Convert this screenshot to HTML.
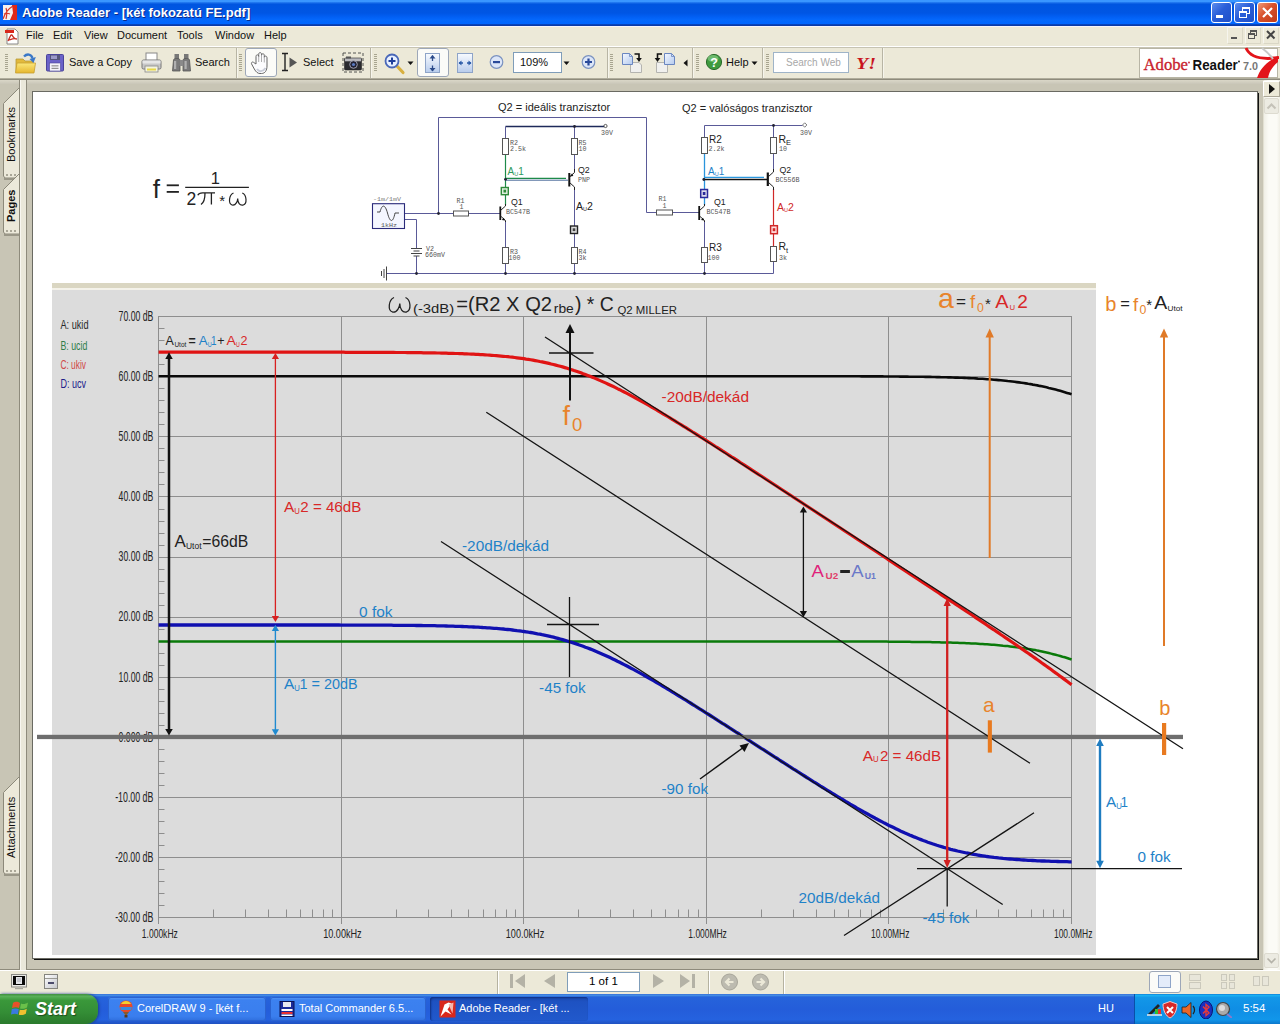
<!DOCTYPE html>
<html><head><meta charset="utf-8"><title>Adobe Reader</title>
<style>
html,body{margin:0;padding:0;}
body{width:1280px;height:1024px;overflow:hidden;position:relative;background:#ECE9D8;font-family:"Liberation Sans",sans-serif;font-size:11px;color:#000;}
.a{position:absolute;}
.t{position:absolute;white-space:nowrap;line-height:1;}
#title{left:0;top:0;width:1280px;height:26px;background:linear-gradient(to bottom,#3A96FF 0px,#3A96FF 1.5px,#1468E8 3px,#0055E0 4.5px,#0056E4 13px,#0260F4 17px,#0468FC 20px,#0066FF 23.5px,#0A3AA8 24.8px,#0A3AA8 26px);}
#title .txt{left:22px;top:6px;font-size:13px;font-weight:bold;color:#fff;text-shadow:1px 1px 0 #0A2A8A;}
.wb{position:absolute;top:2px;width:21px;height:21px;border-radius:3px;border:1px solid #fff;box-sizing:border-box;background:linear-gradient(135deg,#5C8DEE 0%,#2A5ED8 45%,#1F4FC8 100%);}
.wb.x{background:linear-gradient(135deg,#EE9A78 0%,#D8502A 45%,#C03A18 100%);}
#menu{left:0;top:26px;width:1280px;height:20px;background:#ECE9D8;border-top:1px solid #F6F4FA;box-sizing:border-box;}
#menu .t{top:3px;font-size:11px;color:#111;}
#tb{left:0;top:46px;width:1280px;height:34px;background:#ECE9D8;border-top:1px solid #fff;box-sizing:border-box;}
.grip{position:absolute;top:54px;width:3px;height:18px;background:repeating-linear-gradient(to bottom,#A8A590 0,#A8A590 1px,#ECE9D8 1px,#ECE9D8 2px);}
.sep{position:absolute;top:48px;width:1px;height:30px;background:#B8B5A4;border-right:1px solid #F6F5EC;}
.tbt{position:absolute;top:57px;font-size:11px;color:#111;white-space:nowrap;line-height:1;}
.pressed{position:absolute;background:#FBFBF8;border:1px solid #9DA7B8;border-radius:3px;box-sizing:border-box;}
#docbg{left:0;top:80px;width:1280px;height:890px;background:#C8C5B5;}
#status{left:0;top:970px;width:1280px;height:24px;background:#ECE9D8;border-top:1px solid #fff;box-sizing:border-box;}
#task{left:0;top:994px;width:1280px;height:30px;background:linear-gradient(to bottom,#3168D5 0%,#4993E6 4%,#2663DB 10%,#245DDA 50%,#2562DF 85%,#1F51C0 100%);}
#start{left:0;top:994px;width:98px;height:30px;border-radius:0 12px 12px 0;background:linear-gradient(to bottom,#3F8E3F 0%,#58B058 8%,#3A983A 22%,#348E36 60%,#2A7A2C 100%);box-shadow:1px 0 3px #1b3d8f;}
#start .t{left:35px;top:6px;font-size:18px;font-weight:bold;font-style:italic;color:#fff;text-shadow:1px 1px 1px #1d4d1d;}
.tk{position:absolute;top:997px;height:24px;border-radius:3px;background:linear-gradient(to bottom,#5B9CF5 0%,#3C81F0 12%,#3A7EEE 80%,#2F6EDD 100%);box-shadow:inset 0 0 0 1px #2A63D0;}
.tk.act{background:linear-gradient(to bottom,#1A49B0 0%,#1E52C2 20%,#2159CC 100%);box-shadow:inset 1px 1px 2px #0f2f80;}
.tk .t{left:29px;top:6px;font-size:11px;color:#fff;}
#tray{left:1134px;top:994px;width:146px;height:30px;background:linear-gradient(to bottom,#0F80D8 0%,#19B0F2 5%,#1297E8 12%,#0F8EE5 50%,#1196EA 85%,#0C78CC 100%);border-left:1px solid #0A4FA8;box-sizing:border-box;}
</style></head><body>
<div id="title" class="a"><div class="t txt">Adobe Reader - [két fokozatú FE.pdf]</div><svg class="a" style="left:3px;top:5px" width="14" height="15" viewBox="0 0 14 15"><rect x="0" y="0" width="14" height="15" fill="#F4F0EE"/><path d="M9,0 H14 V15 H7 L10,8 Z" fill="#E02818"/><path d="M0,14 C2,8 5,4 10,1 M1,9 C3,8 5,8 7,9 M3,3 C4,6 4,10 3,14" stroke="#D83828" stroke-width="1.2" fill="none"/></svg><div class="wb" style="left:1211px"><div class="a" style="left:4px;top:12px;width:7px;height:3px;background:#fff"></div></div><div class="wb" style="left:1234px"><div class="a" style="left:7px;top:4px;width:8px;height:7px;border:1px solid #fff;border-top-width:2px;box-sizing:border-box"></div><div class="a" style="left:4px;top:8px;width:8px;height:7px;border:1px solid #fff;border-top-width:2px;box-sizing:border-box;background:#2A5ED8"></div></div><div class="wb x" style="left:1257px"><svg class="a" style="left:0;top:0" width="19" height="19"><path d="M5,5 L14,14 M14,5 L5,14" stroke="#fff" stroke-width="2.2"/></svg></div></div><div id="menu" class="a"><svg class="a" style="left:4px;top:1px" width="16" height="17" viewBox="0 0 16 17"><path d="M3,1 H11 L14,4 V16 H3 Z" fill="#fff" stroke="#888" stroke-width="1"/><rect x="1" y="2" width="9" height="3" fill="#D9281C"/><path d="M4,13 C6,9 7,6 8,7 C9,9 10,11 13,11 M5,12 C8,11 10,10 12,11" stroke="#C8281E" stroke-width="1.3" fill="none"/></svg><div class="t" style="left:26px">File</div><div class="t" style="left:53px">Edit</div><div class="t" style="left:84px">View</div><div class="t" style="left:117px">Document</div><div class="t" style="left:177px">Tools</div><div class="t" style="left:215px">Window</div><div class="t" style="left:264px">Help</div><div class="a" style="left:1227px;top:0px;width:16px;height:17px;border:1px solid #F6F5EE;border-right-color:#DAD7C6;border-bottom-color:#DAD7C6;box-sizing:border-box"></div><div class="a" style="left:1245px;top:0px;width:16px;height:17px;border:1px solid #F6F5EE;border-right-color:#DAD7C6;border-bottom-color:#DAD7C6;box-sizing:border-box"></div><div class="a" style="left:1263px;top:0px;width:16px;height:17px;border:1px solid #F6F5EE;border-right-color:#DAD7C6;border-bottom-color:#DAD7C6;box-sizing:border-box"></div><div class="a" style="left:1231px;top:10px;width:6px;height:2px;background:#555"></div><div class="a" style="left:1250px;top:3px;width:7px;height:6px;border:1px solid #555;border-top-width:2px;box-sizing:border-box"></div><div class="a" style="left:1248px;top:6px;width:7px;height:6px;border:1px solid #555;border-top-width:2px;box-sizing:border-box;background:#ECE9D8"></div><svg class="a" style="left:1266px;top:3px" width="10" height="10"><path d="M1,1 L8.5,8.5 M8.5,1 L1,8.5" stroke="#444" stroke-width="2"/></svg></div><div id="tb" class="a"></div><div class="a" style="left:0;top:47px;width:1280px;height:1px;background:#C6C3B2"></div><div class="a" style="left:0;top:78px;width:1280px;height:1px;background:#B0AD9C"></div><div class="a" style="left:0;top:79px;width:1280px;height:1px;background:#8E8B7C"></div><div class="grip" style="left:5px"></div><div class="grip" style="left:239px"></div><div class="grip" style="left:374px"></div><div class="grip" style="left:610px"></div><div class="grip" style="left:696px"></div><div class="grip" style="left:766px"></div><div class="sep" style="left:236px"></div><div class="sep" style="left:370px"></div><div class="sep" style="left:607px"></div><div class="sep" style="left:692px"></div><div class="sep" style="left:762px"></div><div class="sep" style="left:882px"></div><div class="tbt" style="left:69px">Save a Copy</div><div class="tbt" style="left:195px">Search</div><div class="tbt" style="left:303px">Select</div><div class="tbt" style="left:726px">Help</div><div class="pressed" style="left:245px;top:48px;width:32px;height:29px"></div><div class="pressed" style="left:417px;top:48px;width:32px;height:29px"></div><div class="a" style="left:513px;top:52px;width:49px;height:21px;background:#fff;border:1px solid #7F9DB9;box-sizing:border-box"></div><div class="tbt" style="left:520px">109%</div><div class="a" style="left:773px;top:52px;width:76px;height:21px;background:#fff;border:1px solid #9FB4C8;box-sizing:border-box"></div><div class="tbt" style="left:786px;top:58px;color:#A8A8A8;font-size:10px">Search Web</div><svg class="a" style="left:854px;top:52px" width="26" height="22"><text x="2" y="17" font-family="Liberation Serif, serif" font-weight="bold" font-style="italic" font-size="17" fill="#C8141E" textLength="20" lengthAdjust="spacingAndGlyphs">Y!</text></svg><svg class="a" style="left:1138px;top:47px" width="141" height="32" viewBox="0 0 141 32"><rect x="1.5" y="1.5" width="138" height="29" fill="#fff" stroke="#B8B5A5" stroke-width="1"/><text x="5.5" y="23" font-family="Liberation Serif, serif" font-size="17" fill="#C81E2D" stroke="#C81E2D" stroke-width="0.35" textLength="44.5" lengthAdjust="spacingAndGlyphs">Adobe</text><circle cx="51" cy="15.5" r="0.9" fill="#C81E2D"/><text x="54.5" y="23" font-family="Liberation Sans, sans-serif" font-weight="bold" font-size="14.5" fill="#111" textLength="45.3" lengthAdjust="spacingAndGlyphs">Reader</text><circle cx="101" cy="14.5" r="0.9" fill="#111"/><text x="105" y="23" font-family="Liberation Sans, sans-serif" font-weight="bold" font-size="11.5" fill="#777" textLength="15" lengthAdjust="spacingAndGlyphs">7.0</text><path d="M108,1 C112,10 124,13 141,10.5" stroke="#E3141A" stroke-width="3" fill="none"/><path d="M140,9 L140,15 C134,20 131,25 130,31 L119,31 C122,22 128,15 140,9 Z" fill="#E3141A"/><path d="M124,1 C128,4 132,8 135,12" stroke="#C8C8C8" stroke-width="2" fill="none"/></svg><div id="docbg" class="a"></div><div class="a" style="left:0;top:80px;width:1280px;height:4px;background:linear-gradient(to bottom,#DAD7C8,#C9C6B8)"></div><div class="a" style="left:0;top:969px;width:1263px;height:1px;background:#8E8B7C"></div><div class="a" style="left:19px;top:80px;width:8px;height:890px;background:#EAE8DA;border-left:1px solid #8E8B7C;border-right:1px solid #8E8B7C;box-sizing:border-box"></div><div class="a" style="left:20px;top:80px;width:1px;height:890px;background:#F8F7F0"></div><div class="a" style="left:1263px;top:80px;width:17px;height:890px;background:linear-gradient(to right,#F0EFE6,#FBFBF6 30%,#FBFBF6 80%,#F0EFE6);border-left:1px solid #E2E0D2;box-sizing:border-box"></div><div class="a" style="left:1264px;top:98px;width:15px;height:16px;background:#ECEBE2;border:1px solid #DDDBD0;border-radius:2px;box-sizing:border-box"></div><svg class="a" style="left:1266px;top:102px" width="11" height="8"><path d="M1.5,6.5 L5.5,2.5 L9.5,6.5" stroke="#C4C2B8" stroke-width="2" fill="none"/></svg><div class="a" style="left:1264px;top:953px;width:15px;height:15px;background:#ECEBE2;border:1px solid #DDDBD0;border-radius:2px;box-sizing:border-box"></div><svg class="a" style="left:1266px;top:957px" width="11" height="8"><path d="M1.5,1.5 L5.5,5.5 L9.5,1.5" stroke="#B4B2A8" stroke-width="1.6" fill="none"/></svg><div id="status" class="a"></div><div class="a" style="left:567px;top:972px;width:73px;height:20px;background:#fff;border:1px solid #7F9DB9;box-sizing:border-box"></div><div class="t" style="left:589px;top:976px;font-size:11.5px">1 of 1</div><div class="a" style="left:497px;top:971px;width:1px;height:23px;background:#B5B2A0;border-right:1px solid #fff"></div><div class="a" style="left:708px;top:971px;width:1px;height:23px;background:#B5B2A0;border-right:1px solid #fff"></div><div class="a" style="left:783px;top:971px;width:1px;height:23px;background:#B5B2A0;border-right:1px solid #fff"></div><div class="pressed" style="left:1149px;top:971px;width:32px;height:22px"></div><div id="task" class="a"></div><div id="start" class="a"><div class="t">Start</div></div><div class="tk" style="left:108px;width:158px"><div class="t">CorelDRAW 9 - [két f...</div></div><div class="tk" style="left:270px;width:156px"><div class="t">Total Commander 6.5...</div></div><div class="tk act" style="left:430px;width:158px"><div class="t">Adobe Reader - [két ...</div></div><div class="t" style="left:1098px;top:1003px;color:#fff;font-size:11px">HU</div><div id="tray" class="a"><div class="t" style="left:108px;top:9px;color:#fff;font-size:11.5px">5:54</div></div><svg id="doc" width="1280" height="1024" viewBox="0 0 1280 1024" style="position:absolute;left:0;top:0"><rect x="34" y="93" width="1225" height="867" fill="#111"/><rect x="32.5" y="91.5" width="1225" height="867" fill="#fff" stroke="#6A6A62" stroke-width="1"/><rect x="52" y="283" width="1044" height="5" fill="#DAD6C2"/><rect x="52" y="288" width="1044" height="2" fill="#F4F2EA"/><rect x="52" y="290" width="1044" height="665" fill="#DCDCDC"/><path d="M158,316.5 H1072 M158,376.5 H1072 M158,436.5 H1072 M158,496.5 H1072 M158,557.5 H1072 M158,617.5 H1072 M158,677.5 H1072 M158,737.5 H1072 M158,797.5 H1072 M158,857.5 H1072 M158,917.5 H1072 M158.5,316 V924 M341.5,316 V924 M523.5,316 V924 M706.5,316 V924 M888.5,316 V924 M1071.5,316 V924" stroke="#8E8E8E" stroke-width="1" fill="none"/><path d="M158,328.5 H164.5 M158,340.5 H164.5 M158,352.5 H164.5 M158,364.5 H164.5 M158,388.5 H164.5 M158,400.5 H164.5 M158,412.5 H164.5 M158,424.5 H164.5 M158,448.5 H164.5 M158,460.5 H164.5 M158,472.5 H164.5 M158,484.5 H164.5 M158,509.5 H164.5 M158,521.5 H164.5 M158,533.5 H164.5 M158,545.5 H164.5 M158,569.5 H164.5 M158,581.5 H164.5 M158,593.5 H164.5 M158,605.5 H164.5 M158,629.5 H164.5 M158,641.5 H164.5 M158,653.5 H164.5 M158,665.5 H164.5 M158,689.5 H164.5 M158,701.5 H164.5 M158,713.5 H164.5 M158,725.5 H164.5 M158,749.5 H164.5 M158,761.5 H164.5 M158,773.5 H164.5 M158,785.5 H164.5 M158,809.5 H164.5 M158,821.5 H164.5 M158,833.5 H164.5 M158,845.5 H164.5 M158,869.5 H164.5 M158,881.5 H164.5 M158,893.5 H164.5 M158,905.5 H164.5 M213.5,909.5 V917 M245.5,909.5 V917 M268.5,909.5 V917 M286.5,909.5 V917 M300.5,909.5 V917 M312.5,909.5 V917 M323.5,909.5 V917 M332.5,909.5 V917 M396.5,909.5 V917 M428.5,909.5 V917 M451.5,909.5 V917 M468.5,909.5 V917 M483.5,909.5 V917 M495.5,909.5 V917 M506.5,909.5 V917 M515.5,909.5 V917 M578.5,909.5 V917 M610.5,909.5 V917 M633.5,909.5 V917 M651.5,909.5 V917 M665.5,909.5 V917 M678.5,909.5 V917 M688.5,909.5 V917 M698.5,909.5 V917 M761.5,909.5 V917 M793.5,909.5 V917 M816.5,909.5 V917 M834.5,909.5 V917 M848.5,909.5 V917 M860.5,909.5 V917 M871.5,909.5 V917 M880.5,909.5 V917 M943.5,909.5 V917 M976.5,909.5 V917 M998.5,909.5 V917 M1016.5,909.5 V917 M1031.5,909.5 V917 M1043.5,909.5 V917 M1053.5,909.5 V917 M1063.5,909.5 V917" stroke="#8E8E8E" stroke-width="1" fill="none"/><text x="153.4" y="320.8" font-size="13.8" fill="#222" font-family="Liberation Sans, sans-serif" text-anchor="end" textLength="34.8" lengthAdjust="spacingAndGlyphs">70.00 dB</text><text x="153.4" y="380.93" font-size="13.8" fill="#222" font-family="Liberation Sans, sans-serif" text-anchor="end" textLength="34.8" lengthAdjust="spacingAndGlyphs">60.00 dB</text><text x="153.4" y="441.06" font-size="13.8" fill="#222" font-family="Liberation Sans, sans-serif" text-anchor="end" textLength="34.8" lengthAdjust="spacingAndGlyphs">50.00 dB</text><text x="153.4" y="501.19" font-size="13.8" fill="#222" font-family="Liberation Sans, sans-serif" text-anchor="end" textLength="34.8" lengthAdjust="spacingAndGlyphs">40.00 dB</text><text x="153.4" y="561.32" font-size="13.8" fill="#222" font-family="Liberation Sans, sans-serif" text-anchor="end" textLength="34.8" lengthAdjust="spacingAndGlyphs">30.00 dB</text><text x="153.4" y="621.45" font-size="13.8" fill="#222" font-family="Liberation Sans, sans-serif" text-anchor="end" textLength="34.8" lengthAdjust="spacingAndGlyphs">20.00 dB</text><text x="153.4" y="681.5800000000002" font-size="13.8" fill="#222" font-family="Liberation Sans, sans-serif" text-anchor="end" textLength="34.8" lengthAdjust="spacingAndGlyphs">10.00 dB</text><text x="153.4" y="741.71" font-size="13.8" fill="#222" font-family="Liberation Sans, sans-serif" text-anchor="end" textLength="34.8" lengthAdjust="spacingAndGlyphs">0.000 dB</text><text x="153.4" y="801.8400000000001" font-size="13.8" fill="#222" font-family="Liberation Sans, sans-serif" text-anchor="end" textLength="38.2" lengthAdjust="spacingAndGlyphs">-10.00 dB</text><text x="153.4" y="861.9700000000001" font-size="13.8" fill="#222" font-family="Liberation Sans, sans-serif" text-anchor="end" textLength="38.2" lengthAdjust="spacingAndGlyphs">-20.00 dB</text><text x="153.4" y="922.1000000000001" font-size="13.8" fill="#222" font-family="Liberation Sans, sans-serif" text-anchor="end" textLength="38.2" lengthAdjust="spacingAndGlyphs">-30.00 dB</text><text x="159.79999999999998" y="938" font-size="13.5" fill="#222" font-family="Liberation Sans, sans-serif" text-anchor="middle" textLength="36" lengthAdjust="spacingAndGlyphs" >1.000kHz</text><text x="342.3999999999999" y="938" font-size="13.5" fill="#222" font-family="Liberation Sans, sans-serif" text-anchor="middle" textLength="38.5" lengthAdjust="spacingAndGlyphs" >10.00kHz</text><text x="525.0" y="938" font-size="13.5" fill="#222" font-family="Liberation Sans, sans-serif" text-anchor="middle" textLength="38.5" lengthAdjust="spacingAndGlyphs" >100.0kHz</text><text x="707.6" y="938" font-size="13.5" fill="#222" font-family="Liberation Sans, sans-serif" text-anchor="middle" textLength="38.5" lengthAdjust="spacingAndGlyphs" >1.000MHz</text><text x="890.1999999999999" y="938" font-size="13.5" fill="#222" font-family="Liberation Sans, sans-serif" text-anchor="middle" textLength="38.5" lengthAdjust="spacingAndGlyphs" >10.00MHz</text><text x="1073.1999999999996" y="938" font-size="13.5" fill="#222" font-family="Liberation Sans, sans-serif" text-anchor="middle" textLength="38.5" lengthAdjust="spacingAndGlyphs" >100.0MHz</text><text x="60.4" y="329.3" font-size="13" fill="#2A2A2A" font-family="Liberation Sans, sans-serif" textLength="28.1" lengthAdjust="spacingAndGlyphs">A: ukid</text><text x="60.4" y="349.5" font-size="13" fill="#2E7D4A" font-family="Liberation Sans, sans-serif" textLength="26.9" lengthAdjust="spacingAndGlyphs">B: ucid</text><text x="60.4" y="368.7" font-size="13" fill="#D04848" font-family="Liberation Sans, sans-serif" textLength="25.6" lengthAdjust="spacingAndGlyphs">C: ukiv</text><text x="60.4" y="387.8" font-size="13" fill="#20208A" font-family="Liberation Sans, sans-serif" textLength="25.6" lengthAdjust="spacingAndGlyphs">D: ucv</text><path d="M158.6,641.4 L160.9,641.4 L163.2,641.4 L165.4,641.4 L167.7,641.4 L170.0,641.4 L172.3,641.4 L174.6,641.4 L176.9,641.4 L179.1,641.4 L181.4,641.4 L183.7,641.4 L186.0,641.4 L188.3,641.4 L190.6,641.4 L192.8,641.4 L195.1,641.4 L197.4,641.4 L199.7,641.4 L202.0,641.4 L204.2,641.4 L206.5,641.4 L208.8,641.4 L211.1,641.4 L213.4,641.4 L215.7,641.4 L217.9,641.4 L220.2,641.4 L222.5,641.4 L224.8,641.4 L227.1,641.4 L229.4,641.4 L231.6,641.4 L233.9,641.4 L236.2,641.4 L238.5,641.4 L240.8,641.4 L243.1,641.4 L245.3,641.4 L247.6,641.4 L249.9,641.4 L252.2,641.4 L254.5,641.4 L256.7,641.4 L259.0,641.4 L261.3,641.4 L263.6,641.4 L265.9,641.4 L268.2,641.4 L270.4,641.4 L272.7,641.4 L275.0,641.4 L277.3,641.4 L279.6,641.4 L281.9,641.4 L284.1,641.4 L286.4,641.4 L288.7,641.4 L291.0,641.4 L293.3,641.4 L295.5,641.4 L297.8,641.4 L300.1,641.4 L302.4,641.4 L304.7,641.4 L307.0,641.4 L309.2,641.4 L311.5,641.4 L313.8,641.4 L316.1,641.4 L318.4,641.4 L320.7,641.4 L322.9,641.4 L325.2,641.4 L327.5,641.4 L329.8,641.4 L332.1,641.4 L334.4,641.4 L336.6,641.4 L338.9,641.4 L341.2,641.4 L343.5,641.4 L345.8,641.4 L348.0,641.4 L350.3,641.4 L352.6,641.4 L354.9,641.4 L357.2,641.4 L359.5,641.4 L361.7,641.4 L364.0,641.4 L366.3,641.4 L368.6,641.4 L370.9,641.4 L373.2,641.4 L375.4,641.4 L377.7,641.4 L380.0,641.4 L382.3,641.4 L384.6,641.4 L386.8,641.4 L389.1,641.4 L391.4,641.4 L393.7,641.4 L396.0,641.4 L398.3,641.4 L400.5,641.4 L402.8,641.4 L405.1,641.4 L407.4,641.4 L409.7,641.4 L412.0,641.4 L414.2,641.4 L416.5,641.4 L418.8,641.4 L421.1,641.4 L423.4,641.4 L425.7,641.4 L427.9,641.4 L430.2,641.4 L432.5,641.4 L434.8,641.4 L437.1,641.4 L439.3,641.4 L441.6,641.4 L443.9,641.4 L446.2,641.4 L448.5,641.4 L450.8,641.4 L453.0,641.4 L455.3,641.4 L457.6,641.4 L459.9,641.4 L462.2,641.4 L464.5,641.4 L466.7,641.4 L469.0,641.4 L471.3,641.4 L473.6,641.4 L475.9,641.4 L478.1,641.4 L480.4,641.4 L482.7,641.4 L485.0,641.4 L487.3,641.4 L489.6,641.4 L491.8,641.4 L494.1,641.4 L496.4,641.4 L498.7,641.4 L501.0,641.4 L503.3,641.4 L505.5,641.4 L507.8,641.4 L510.1,641.4 L512.4,641.4 L514.7,641.4 L517.0,641.4 L519.2,641.4 L521.5,641.4 L523.8,641.4 L526.1,641.4 L528.4,641.4 L530.6,641.4 L532.9,641.4 L535.2,641.4 L537.5,641.4 L539.8,641.4 L542.1,641.4 L544.3,641.4 L546.6,641.4 L548.9,641.4 L551.2,641.4 L553.5,641.4 L555.8,641.4 L558.0,641.4 L560.3,641.4 L562.6,641.4 L564.9,641.4 L567.2,641.4 L569.4,641.4 L571.7,641.4 L574.0,641.4 L576.3,641.4 L578.6,641.4 L580.9,641.4 L583.1,641.4 L585.4,641.4 L587.7,641.4 L590.0,641.4 L592.3,641.4 L594.6,641.4 L596.8,641.4 L599.1,641.4 L601.4,641.4 L603.7,641.4 L606.0,641.4 L608.3,641.4 L610.5,641.4 L612.8,641.4 L615.1,641.4 L617.4,641.4 L619.7,641.4 L621.9,641.4 L624.2,641.4 L626.5,641.4 L628.8,641.4 L631.1,641.4 L633.4,641.4 L635.6,641.4 L637.9,641.4 L640.2,641.4 L642.5,641.4 L644.8,641.4 L647.1,641.4 L649.3,641.4 L651.6,641.4 L653.9,641.4 L656.2,641.4 L658.5,641.4 L660.7,641.4 L663.0,641.4 L665.3,641.4 L667.6,641.4 L669.9,641.4 L672.2,641.4 L674.4,641.4 L676.7,641.4 L679.0,641.4 L681.3,641.4 L683.6,641.4 L685.9,641.4 L688.1,641.4 L690.4,641.4 L692.7,641.4 L695.0,641.4 L697.3,641.4 L699.6,641.4 L701.8,641.4 L704.1,641.4 L706.4,641.4 L708.7,641.4 L711.0,641.4 L713.2,641.4 L715.5,641.4 L717.8,641.4 L720.1,641.4 L722.4,641.4 L724.7,641.4 L726.9,641.4 L729.2,641.4 L731.5,641.4 L733.8,641.4 L736.1,641.4 L738.4,641.4 L740.6,641.4 L742.9,641.4 L745.2,641.4 L747.5,641.4 L749.8,641.4 L752.0,641.4 L754.3,641.4 L756.6,641.4 L758.9,641.4 L761.2,641.4 L763.5,641.4 L765.7,641.4 L768.0,641.4 L770.3,641.4 L772.6,641.4 L774.9,641.4 L777.2,641.4 L779.4,641.4 L781.7,641.4 L784.0,641.4 L786.3,641.4 L788.6,641.4 L790.9,641.4 L793.1,641.4 L795.4,641.4 L797.7,641.4 L800.0,641.4 L802.3,641.4 L804.5,641.4 L806.8,641.4 L809.1,641.4 L811.4,641.4 L813.7,641.4 L816.0,641.4 L818.2,641.4 L820.5,641.4 L822.8,641.4 L825.1,641.4 L827.4,641.4 L829.7,641.5 L831.9,641.5 L834.2,641.5 L836.5,641.5 L838.8,641.5 L841.1,641.5 L843.3,641.5 L845.6,641.5 L847.9,641.5 L850.2,641.5 L852.5,641.5 L854.8,641.5 L857.0,641.5 L859.3,641.5 L861.6,641.5 L863.9,641.5 L866.2,641.5 L868.5,641.5 L870.7,641.6 L873.0,641.6 L875.3,641.6 L877.6,641.6 L879.9,641.6 L882.2,641.6 L884.4,641.6 L886.7,641.6 L889.0,641.7 L891.3,641.7 L893.6,641.7 L895.8,641.7 L898.1,641.7 L900.4,641.7 L902.7,641.8 L905.0,641.8 L907.3,641.8 L909.5,641.8 L911.8,641.9 L914.1,641.9 L916.4,641.9 L918.7,641.9 L921.0,642.0 L923.2,642.0 L925.5,642.0 L927.8,642.1 L930.1,642.1 L932.4,642.2 L934.6,642.2 L936.9,642.3 L939.2,642.3 L941.5,642.4 L943.8,642.4 L946.1,642.5 L948.3,642.5 L950.6,642.6 L952.9,642.7 L955.2,642.7 L957.5,642.8 L959.8,642.9 L962.0,643.0 L964.3,643.1 L966.6,643.2 L968.9,643.3 L971.2,643.4 L973.5,643.5 L975.7,643.6 L978.0,643.7 L980.3,643.9 L982.6,644.0 L984.9,644.2 L987.1,644.3 L989.4,644.5 L991.7,644.7 L994.0,644.8 L996.3,645.0 L998.6,645.2 L1000.8,645.4 L1003.1,645.7 L1005.4,645.9 L1007.7,646.1 L1010.0,646.4 L1012.3,646.7 L1014.5,647.0 L1016.8,647.2 L1019.1,647.6 L1021.4,647.9 L1023.7,648.2 L1025.9,648.6 L1028.2,648.9 L1030.5,649.3 L1032.8,649.7 L1035.1,650.1 L1037.4,650.6 L1039.6,651.0 L1041.9,651.5 L1044.2,652.0 L1046.5,652.5 L1048.8,653.0 L1051.1,653.6 L1053.3,654.2 L1055.6,654.8 L1057.9,655.4 L1060.2,656.0 L1062.5,656.7 L1064.8,657.3 L1067.0,658.0 L1069.3,658.8 L1071.6,659.5" stroke="#0A7A0A" stroke-width="2.5" fill="none"/><path d="M158.6,376.2 L160.9,376.2 L163.2,376.2 L165.4,376.2 L167.7,376.2 L170.0,376.2 L172.3,376.2 L174.6,376.2 L176.9,376.2 L179.1,376.2 L181.4,376.2 L183.7,376.2 L186.0,376.2 L188.3,376.2 L190.6,376.2 L192.8,376.2 L195.1,376.2 L197.4,376.2 L199.7,376.2 L202.0,376.2 L204.2,376.2 L206.5,376.2 L208.8,376.2 L211.1,376.2 L213.4,376.2 L215.7,376.2 L217.9,376.2 L220.2,376.2 L222.5,376.2 L224.8,376.2 L227.1,376.2 L229.4,376.2 L231.6,376.2 L233.9,376.2 L236.2,376.2 L238.5,376.2 L240.8,376.2 L243.1,376.2 L245.3,376.2 L247.6,376.2 L249.9,376.2 L252.2,376.2 L254.5,376.2 L256.7,376.2 L259.0,376.2 L261.3,376.2 L263.6,376.2 L265.9,376.2 L268.2,376.2 L270.4,376.2 L272.7,376.2 L275.0,376.2 L277.3,376.2 L279.6,376.2 L281.9,376.2 L284.1,376.2 L286.4,376.2 L288.7,376.2 L291.0,376.2 L293.3,376.2 L295.5,376.2 L297.8,376.2 L300.1,376.2 L302.4,376.2 L304.7,376.2 L307.0,376.2 L309.2,376.2 L311.5,376.2 L313.8,376.2 L316.1,376.2 L318.4,376.2 L320.7,376.2 L322.9,376.2 L325.2,376.2 L327.5,376.2 L329.8,376.2 L332.1,376.2 L334.4,376.2 L336.6,376.2 L338.9,376.2 L341.2,376.2 L343.5,376.2 L345.8,376.2 L348.0,376.2 L350.3,376.2 L352.6,376.2 L354.9,376.2 L357.2,376.2 L359.5,376.2 L361.7,376.2 L364.0,376.2 L366.3,376.2 L368.6,376.2 L370.9,376.2 L373.2,376.2 L375.4,376.2 L377.7,376.2 L380.0,376.2 L382.3,376.2 L384.6,376.2 L386.8,376.2 L389.1,376.2 L391.4,376.2 L393.7,376.2 L396.0,376.2 L398.3,376.2 L400.5,376.2 L402.8,376.2 L405.1,376.2 L407.4,376.2 L409.7,376.2 L412.0,376.2 L414.2,376.2 L416.5,376.2 L418.8,376.2 L421.1,376.2 L423.4,376.2 L425.7,376.2 L427.9,376.2 L430.2,376.2 L432.5,376.2 L434.8,376.2 L437.1,376.2 L439.3,376.2 L441.6,376.2 L443.9,376.2 L446.2,376.2 L448.5,376.2 L450.8,376.2 L453.0,376.2 L455.3,376.2 L457.6,376.2 L459.9,376.2 L462.2,376.2 L464.5,376.2 L466.7,376.2 L469.0,376.2 L471.3,376.2 L473.6,376.2 L475.9,376.2 L478.1,376.2 L480.4,376.2 L482.7,376.2 L485.0,376.2 L487.3,376.2 L489.6,376.2 L491.8,376.2 L494.1,376.2 L496.4,376.2 L498.7,376.2 L501.0,376.2 L503.3,376.2 L505.5,376.2 L507.8,376.2 L510.1,376.2 L512.4,376.2 L514.7,376.2 L517.0,376.2 L519.2,376.2 L521.5,376.2 L523.8,376.2 L526.1,376.2 L528.4,376.2 L530.6,376.2 L532.9,376.2 L535.2,376.2 L537.5,376.2 L539.8,376.2 L542.1,376.2 L544.3,376.2 L546.6,376.2 L548.9,376.2 L551.2,376.2 L553.5,376.2 L555.8,376.2 L558.0,376.2 L560.3,376.2 L562.6,376.2 L564.9,376.2 L567.2,376.2 L569.4,376.2 L571.7,376.2 L574.0,376.2 L576.3,376.2 L578.6,376.2 L580.9,376.2 L583.1,376.2 L585.4,376.2 L587.7,376.2 L590.0,376.2 L592.3,376.2 L594.6,376.2 L596.8,376.2 L599.1,376.2 L601.4,376.2 L603.7,376.2 L606.0,376.2 L608.3,376.2 L610.5,376.2 L612.8,376.2 L615.1,376.2 L617.4,376.2 L619.7,376.2 L621.9,376.2 L624.2,376.2 L626.5,376.2 L628.8,376.2 L631.1,376.2 L633.4,376.2 L635.6,376.2 L637.9,376.2 L640.2,376.2 L642.5,376.2 L644.8,376.2 L647.1,376.2 L649.3,376.2 L651.6,376.2 L653.9,376.2 L656.2,376.2 L658.5,376.2 L660.7,376.2 L663.0,376.2 L665.3,376.2 L667.6,376.2 L669.9,376.2 L672.2,376.2 L674.4,376.2 L676.7,376.2 L679.0,376.2 L681.3,376.2 L683.6,376.2 L685.9,376.2 L688.1,376.2 L690.4,376.2 L692.7,376.2 L695.0,376.2 L697.3,376.2 L699.6,376.2 L701.8,376.2 L704.1,376.2 L706.4,376.2 L708.7,376.2 L711.0,376.2 L713.2,376.2 L715.5,376.2 L717.8,376.2 L720.1,376.2 L722.4,376.2 L724.7,376.2 L726.9,376.2 L729.2,376.2 L731.5,376.2 L733.8,376.2 L736.1,376.2 L738.4,376.2 L740.6,376.2 L742.9,376.2 L745.2,376.2 L747.5,376.2 L749.8,376.2 L752.0,376.2 L754.3,376.2 L756.6,376.2 L758.9,376.2 L761.2,376.2 L763.5,376.2 L765.7,376.2 L768.0,376.2 L770.3,376.2 L772.6,376.2 L774.9,376.2 L777.2,376.2 L779.4,376.2 L781.7,376.2 L784.0,376.2 L786.3,376.2 L788.6,376.2 L790.9,376.2 L793.1,376.2 L795.4,376.2 L797.7,376.2 L800.0,376.2 L802.3,376.2 L804.5,376.3 L806.8,376.3 L809.1,376.3 L811.4,376.3 L813.7,376.3 L816.0,376.3 L818.2,376.3 L820.5,376.3 L822.8,376.3 L825.1,376.3 L827.4,376.3 L829.7,376.3 L831.9,376.3 L834.2,376.3 L836.5,376.3 L838.8,376.3 L841.1,376.3 L843.3,376.3 L845.6,376.3 L847.9,376.3 L850.2,376.3 L852.5,376.3 L854.8,376.3 L857.0,376.3 L859.3,376.3 L861.6,376.4 L863.9,376.4 L866.2,376.4 L868.5,376.4 L870.7,376.4 L873.0,376.4 L875.3,376.4 L877.6,376.4 L879.9,376.4 L882.2,376.4 L884.4,376.5 L886.7,376.5 L889.0,376.5 L891.3,376.5 L893.6,376.5 L895.8,376.5 L898.1,376.5 L900.4,376.6 L902.7,376.6 L905.0,376.6 L907.3,376.6 L909.5,376.7 L911.8,376.7 L914.1,376.7 L916.4,376.7 L918.7,376.8 L921.0,376.8 L923.2,376.8 L925.5,376.9 L927.8,376.9 L930.1,376.9 L932.4,377.0 L934.6,377.0 L936.9,377.1 L939.2,377.1 L941.5,377.2 L943.8,377.2 L946.1,377.3 L948.3,377.4 L950.6,377.4 L952.9,377.5 L955.2,377.6 L957.5,377.6 L959.8,377.7 L962.0,377.8 L964.3,377.9 L966.6,378.0 L968.9,378.1 L971.2,378.2 L973.5,378.3 L975.7,378.4 L978.0,378.6 L980.3,378.7 L982.6,378.8 L984.9,379.0 L987.1,379.2 L989.4,379.3 L991.7,379.5 L994.0,379.7 L996.3,379.9 L998.6,380.1 L1000.8,380.3 L1003.1,380.5 L1005.4,380.7 L1007.7,381.0 L1010.0,381.2 L1012.3,381.5 L1014.5,381.8 L1016.8,382.1 L1019.1,382.4 L1021.4,382.7 L1023.7,383.0 L1025.9,383.4 L1028.2,383.8 L1030.5,384.1 L1032.8,384.6 L1035.1,385.0 L1037.4,385.4 L1039.6,385.9 L1041.9,386.3 L1044.2,386.8 L1046.5,387.3 L1048.8,387.9 L1051.1,388.4 L1053.3,389.0 L1055.6,389.6 L1057.9,390.2 L1060.2,390.8 L1062.5,391.5 L1064.8,392.2 L1067.0,392.9 L1069.3,393.6 L1071.6,394.3" stroke="#0A0A0A" stroke-width="2.6" fill="none"/><path d="M158.6,625.0 L160.9,625.0 L163.2,625.0 L165.4,625.0 L167.7,625.0 L170.0,625.0 L172.3,625.0 L174.6,625.0 L176.9,625.0 L179.1,625.0 L181.4,625.0 L183.7,625.0 L186.0,625.0 L188.3,625.0 L190.6,625.0 L192.8,625.0 L195.1,625.0 L197.4,625.0 L199.7,625.0 L202.0,625.0 L204.2,625.0 L206.5,625.0 L208.8,625.0 L211.1,625.0 L213.4,625.0 L215.7,625.0 L217.9,625.0 L220.2,625.0 L222.5,625.0 L224.8,625.0 L227.1,625.0 L229.4,625.0 L231.6,625.0 L233.9,625.0 L236.2,625.0 L238.5,625.0 L240.8,625.0 L243.1,625.0 L245.3,625.0 L247.6,625.0 L249.9,625.0 L252.2,625.0 L254.5,625.0 L256.7,625.0 L259.0,625.0 L261.3,625.0 L263.6,625.0 L265.9,625.0 L268.2,625.0 L270.4,625.0 L272.7,625.0 L275.0,625.0 L277.3,625.0 L279.6,625.0 L281.9,625.0 L284.1,625.0 L286.4,625.0 L288.7,625.0 L291.0,625.0 L293.3,625.0 L295.5,625.0 L297.8,625.0 L300.1,625.0 L302.4,625.0 L304.7,625.0 L307.0,625.0 L309.2,625.0 L311.5,625.0 L313.8,625.0 L316.1,625.0 L318.4,625.0 L320.7,625.0 L322.9,625.0 L325.2,625.0 L327.5,625.0 L329.8,625.0 L332.1,625.0 L334.4,625.0 L336.6,625.0 L338.9,625.0 L341.2,625.1 L343.5,625.1 L345.8,625.1 L348.0,625.1 L350.3,625.1 L352.6,625.1 L354.9,625.1 L357.2,625.1 L359.5,625.1 L361.7,625.1 L364.0,625.1 L366.3,625.1 L368.6,625.1 L370.9,625.1 L373.2,625.1 L375.4,625.2 L377.7,625.2 L380.0,625.2 L382.3,625.2 L384.6,625.2 L386.8,625.2 L389.1,625.2 L391.4,625.2 L393.7,625.3 L396.0,625.3 L398.3,625.3 L400.5,625.3 L402.8,625.3 L405.1,625.3 L407.4,625.4 L409.7,625.4 L412.0,625.4 L414.2,625.4 L416.5,625.5 L418.8,625.5 L421.1,625.5 L423.4,625.6 L425.7,625.6 L427.9,625.6 L430.2,625.7 L432.5,625.7 L434.8,625.7 L437.1,625.8 L439.3,625.8 L441.6,625.9 L443.9,625.9 L446.2,626.0 L448.5,626.1 L450.8,626.1 L453.0,626.2 L455.3,626.3 L457.6,626.3 L459.9,626.4 L462.2,626.5 L464.5,626.6 L466.7,626.7 L469.0,626.8 L471.3,626.9 L473.6,627.0 L475.9,627.1 L478.1,627.2 L480.4,627.3 L482.7,627.5 L485.0,627.6 L487.3,627.8 L489.6,627.9 L491.8,628.1 L494.1,628.3 L496.4,628.4 L498.7,628.6 L501.0,628.8 L503.3,629.0 L505.5,629.3 L507.8,629.5 L510.1,629.7 L512.4,630.0 L514.7,630.3 L517.0,630.6 L519.2,630.8 L521.5,631.2 L523.8,631.5 L526.1,631.8 L528.4,632.2 L530.6,632.5 L532.9,632.9 L535.2,633.3 L537.5,633.8 L539.8,634.2 L542.1,634.7 L544.3,635.1 L546.6,635.6 L548.9,636.1 L551.2,636.7 L553.5,637.2 L555.8,637.8 L558.0,638.4 L560.3,639.0 L562.6,639.6 L564.9,640.3 L567.2,641.0 L569.4,641.7 L571.7,642.4 L574.0,643.1 L576.3,643.9 L578.6,644.7 L580.9,645.5 L583.1,646.3 L585.4,647.2 L587.7,648.0 L590.0,648.9 L592.3,649.8 L594.6,650.8 L596.8,651.7 L599.1,652.7 L601.4,653.7 L603.7,654.7 L606.0,655.7 L608.3,656.8 L610.5,657.8 L612.8,658.9 L615.1,660.0 L617.4,661.2 L619.7,662.3 L621.9,663.4 L624.2,664.6 L626.5,665.8 L628.8,667.0 L631.1,668.2 L633.4,669.4 L635.6,670.6 L637.9,671.9 L640.2,673.1 L642.5,674.4 L644.8,675.7 L647.1,677.0 L649.3,678.3 L651.6,679.6 L653.9,680.9 L656.2,682.3 L658.5,683.6 L660.7,684.9 L663.0,686.3 L665.3,687.7 L667.6,689.0 L669.9,690.4 L672.2,691.8 L674.4,693.2 L676.7,694.6 L679.0,696.0 L681.3,697.4 L683.6,698.8 L685.9,700.2 L688.1,701.6 L690.4,703.0 L692.7,704.5 L695.0,705.9 L697.3,707.3 L699.6,708.8 L701.8,710.2 L704.1,711.6 L706.4,713.1 L708.7,714.5 L711.0,716.0 L713.2,717.4 L715.5,718.9 L717.8,720.4 L720.1,721.8 L722.4,723.3 L724.7,724.7 L726.9,726.2 L729.2,727.7 L731.5,729.1 L733.8,730.6 L736.1,732.1 L738.4,733.5 L740.6,735.0 L742.9,736.5 L745.2,737.9 L747.5,739.4 L749.8,740.9 L752.0,742.4 L754.3,743.8 L756.6,745.3 L758.9,746.8 L761.2,748.3 L763.5,749.7 L765.7,751.2 L768.0,752.7 L770.3,754.1 L772.6,755.6 L774.9,757.1 L777.2,758.5 L779.4,760.0 L781.7,761.5 L784.0,762.9 L786.3,764.4 L788.6,765.9 L790.9,767.3 L793.1,768.8 L795.4,770.2 L797.7,771.7 L800.0,773.1 L802.3,774.6 L804.5,776.0 L806.8,777.5 L809.1,778.9 L811.4,780.3 L813.7,781.8 L816.0,783.2 L818.2,784.6 L820.5,786.1 L822.8,787.5 L825.1,788.9 L827.4,790.3 L829.7,791.7 L831.9,793.1 L834.2,794.5 L836.5,795.9 L838.8,797.3 L841.1,798.6 L843.3,800.0 L845.6,801.4 L847.9,802.7 L850.2,804.1 L852.5,805.4 L854.8,806.7 L857.0,808.1 L859.3,809.4 L861.6,810.7 L863.9,812.0 L866.2,813.2 L868.5,814.5 L870.7,815.8 L873.0,817.0 L875.3,818.3 L877.6,819.5 L879.9,820.7 L882.2,821.9 L884.4,823.1 L886.7,824.2 L889.0,825.4 L891.3,826.5 L893.6,827.6 L895.8,828.7 L898.1,829.8 L900.4,830.9 L902.7,831.9 L905.0,833.0 L907.3,834.0 L909.5,835.0 L911.8,835.9 L914.1,836.9 L916.4,837.8 L918.7,838.7 L921.0,839.6 L923.2,840.5 L925.5,841.3 L927.8,842.2 L930.1,843.0 L932.4,843.8 L934.6,844.5 L936.9,845.3 L939.2,846.0 L941.5,846.7 L943.8,847.4 L946.1,848.0 L948.3,848.6 L950.6,849.3 L952.9,849.9 L955.2,850.4 L957.5,851.0 L959.8,851.5 L962.0,852.0 L964.3,852.5 L966.6,853.0 L968.9,853.4 L971.2,853.9 L973.5,854.3 L975.7,854.7 L978.0,855.1 L980.3,855.5 L982.6,855.8 L984.9,856.1 L987.1,856.5 L989.4,856.8 L991.7,857.1 L994.0,857.4 L996.3,857.6 L998.6,857.9 L1000.8,858.1 L1003.1,858.4 L1005.4,858.6 L1007.7,858.8 L1010.0,859.0 L1012.3,859.2 L1014.5,859.4 L1016.8,859.5 L1019.1,859.7 L1021.4,859.9 L1023.7,860.0 L1025.9,860.1 L1028.2,860.3 L1030.5,860.4 L1032.8,860.5 L1035.1,860.6 L1037.4,860.8 L1039.6,860.9 L1041.9,861.0 L1044.2,861.0 L1046.5,861.1 L1048.8,861.2 L1051.1,861.3 L1053.3,861.4 L1055.6,861.4 L1057.9,861.5 L1060.2,861.6 L1062.5,861.6 L1064.8,861.7 L1067.0,861.7 L1069.3,861.8 L1071.6,861.8" stroke="#1010B0" stroke-width="3.3" fill="none"/><path d="M158.6,352.2 L160.9,352.2 L163.2,352.2 L165.4,352.2 L167.7,352.2 L170.0,352.2 L172.3,352.2 L174.6,352.2 L176.9,352.2 L179.1,352.2 L181.4,352.2 L183.7,352.2 L186.0,352.2 L188.3,352.2 L190.6,352.2 L192.8,352.2 L195.1,352.2 L197.4,352.2 L199.7,352.2 L202.0,352.2 L204.2,352.2 L206.5,352.2 L208.8,352.2 L211.1,352.2 L213.4,352.2 L215.7,352.2 L217.9,352.2 L220.2,352.2 L222.5,352.2 L224.8,352.2 L227.1,352.2 L229.4,352.2 L231.6,352.2 L233.9,352.2 L236.2,352.2 L238.5,352.2 L240.8,352.2 L243.1,352.2 L245.3,352.2 L247.6,352.2 L249.9,352.2 L252.2,352.2 L254.5,352.2 L256.7,352.2 L259.0,352.2 L261.3,352.2 L263.6,352.2 L265.9,352.2 L268.2,352.2 L270.4,352.2 L272.7,352.2 L275.0,352.2 L277.3,352.2 L279.6,352.2 L281.9,352.2 L284.1,352.2 L286.4,352.2 L288.7,352.2 L291.0,352.2 L293.3,352.2 L295.5,352.2 L297.8,352.2 L300.1,352.2 L302.4,352.2 L304.7,352.2 L307.0,352.2 L309.2,352.2 L311.5,352.2 L313.8,352.2 L316.1,352.2 L318.4,352.2 L320.7,352.2 L322.9,352.2 L325.2,352.2 L327.5,352.2 L329.8,352.2 L332.1,352.2 L334.4,352.2 L336.6,352.2 L338.9,352.2 L341.2,352.2 L343.5,352.2 L345.8,352.3 L348.0,352.3 L350.3,352.3 L352.6,352.3 L354.9,352.3 L357.2,352.3 L359.5,352.3 L361.7,352.3 L364.0,352.3 L366.3,352.3 L368.6,352.3 L370.9,352.3 L373.2,352.3 L375.4,352.3 L377.7,352.4 L380.0,352.4 L382.3,352.4 L384.6,352.4 L386.8,352.4 L389.1,352.4 L391.4,352.4 L393.7,352.4 L396.0,352.5 L398.3,352.5 L400.5,352.5 L402.8,352.5 L405.1,352.5 L407.4,352.6 L409.7,352.6 L412.0,352.6 L414.2,352.6 L416.5,352.7 L418.8,352.7 L421.1,352.7 L423.4,352.8 L425.7,352.8 L427.9,352.8 L430.2,352.9 L432.5,352.9 L434.8,352.9 L437.1,353.0 L439.3,353.0 L441.6,353.1 L443.9,353.1 L446.2,353.2 L448.5,353.3 L450.8,353.3 L453.0,353.4 L455.3,353.5 L457.6,353.5 L459.9,353.6 L462.2,353.7 L464.5,353.8 L466.7,353.9 L469.0,354.0 L471.3,354.1 L473.6,354.2 L475.9,354.3 L478.1,354.4 L480.4,354.6 L482.7,354.7 L485.0,354.8 L487.3,355.0 L489.6,355.1 L491.8,355.3 L494.1,355.5 L496.4,355.7 L498.7,355.9 L501.0,356.1 L503.3,356.3 L505.5,356.5 L507.8,356.7 L510.1,357.0 L512.4,357.2 L514.7,357.5 L517.0,357.8 L519.2,358.1 L521.5,358.4 L523.8,358.7 L526.1,359.1 L528.4,359.4 L530.6,359.8 L532.9,360.2 L535.2,360.6 L537.5,361.0 L539.8,361.5 L542.1,361.9 L544.3,362.4 L546.6,362.9 L548.9,363.4 L551.2,364.0 L553.5,364.5 L555.8,365.1 L558.0,365.7 L560.3,366.3 L562.6,366.9 L564.9,367.6 L567.2,368.3 L569.4,369.0 L571.7,369.7 L574.0,370.5 L576.3,371.2 L578.6,372.0 L580.9,372.8 L583.1,373.7 L585.4,374.5 L587.7,375.4 L590.0,376.3 L592.3,377.2 L594.6,378.1 L596.8,379.1 L599.1,380.1 L601.4,381.1 L603.7,382.1 L606.0,383.1 L608.3,384.2 L610.5,385.2 L612.8,386.3 L615.1,387.4 L617.4,388.6 L619.7,389.7 L621.9,390.9 L624.2,392.0 L626.5,393.2 L628.8,394.4 L631.1,395.6 L633.4,396.8 L635.6,398.1 L637.9,399.3 L640.2,400.6 L642.5,401.9 L644.8,403.1 L647.1,404.4 L649.3,405.7 L651.6,407.1 L653.9,408.4 L656.2,409.7 L658.5,411.1 L660.7,412.4 L663.0,413.8 L665.3,415.1 L667.6,416.5 L669.9,417.9 L672.2,419.3 L674.4,420.7 L676.7,422.1 L679.0,423.5 L681.3,424.9 L683.6,426.3 L685.9,427.7 L688.1,429.1 L690.4,430.5 L692.7,432.0 L695.0,433.4 L697.3,434.8 L699.6,436.3 L701.8,437.7 L704.1,439.2 L706.4,440.6 L708.7,442.1 L711.0,443.5 L713.2,445.0 L715.5,446.5 L717.8,447.9 L720.1,449.4 L722.4,450.9 L724.7,452.3 L726.9,453.8 L729.2,455.3 L731.5,456.8 L733.8,458.2 L736.1,459.7 L738.4,461.2 L740.6,462.7 L742.9,464.2 L745.2,465.6 L747.5,467.1 L749.8,468.6 L752.0,470.1 L754.3,471.6 L756.6,473.1 L758.9,474.6 L761.2,476.0 L763.5,477.5 L765.7,479.0 L768.0,480.5 L770.3,482.0 L772.6,483.5 L774.9,485.0 L777.2,486.5 L779.4,488.0 L781.7,489.5 L784.0,491.0 L786.3,492.5 L788.6,494.0 L790.9,495.5 L793.1,497.0 L795.4,498.5 L797.7,500.0 L800.0,501.5 L802.3,503.0 L804.5,504.5 L806.8,506.0 L809.1,507.5 L811.4,509.0 L813.7,510.5 L816.0,512.0 L818.2,513.5 L820.5,515.0 L822.8,516.5 L825.1,518.0 L827.4,519.5 L829.7,521.0 L831.9,522.5 L834.2,524.0 L836.5,525.5 L838.8,527.0 L841.1,528.5 L843.3,530.0 L845.6,531.5 L847.9,533.0 L850.2,534.5 L852.5,536.0 L854.8,537.5 L857.0,539.0 L859.3,540.5 L861.6,542.0 L863.9,543.5 L866.2,545.0 L868.5,546.5 L870.7,548.0 L873.0,549.5 L875.3,551.0 L877.6,552.5 L879.9,554.0 L882.2,555.5 L884.4,557.0 L886.7,558.5 L889.0,560.1 L891.3,561.6 L893.6,563.1 L895.8,564.6 L898.1,566.1 L900.4,567.6 L902.7,569.1 L905.0,570.6 L907.3,572.1 L909.5,573.6 L911.8,575.1 L914.1,576.6 L916.4,578.1 L918.7,579.6 L921.0,581.2 L923.2,582.7 L925.5,584.2 L927.8,585.7 L930.1,587.2 L932.4,588.7 L934.6,590.2 L936.9,591.7 L939.2,593.2 L941.5,594.8 L943.8,596.3 L946.1,597.8 L948.3,599.3 L950.6,600.8 L952.9,602.3 L955.2,603.9 L957.5,605.4 L959.8,606.9 L962.0,608.4 L964.3,609.9 L966.6,611.5 L968.9,613.0 L971.2,614.5 L973.5,616.0 L975.7,617.6 L978.0,619.1 L980.3,620.6 L982.6,622.2 L984.9,623.7 L987.1,625.2 L989.4,626.8 L991.7,628.3 L994.0,629.8 L996.3,631.4 L998.6,632.9 L1000.8,634.5 L1003.1,636.0 L1005.4,637.6 L1007.7,639.1 L1010.0,640.7 L1012.3,642.3 L1014.5,643.8 L1016.8,645.4 L1019.1,647.0 L1021.4,648.6 L1023.7,650.1 L1025.9,651.7 L1028.2,653.3 L1030.5,654.9 L1032.8,656.5 L1035.1,658.1 L1037.4,659.7 L1039.6,661.3 L1041.9,663.0 L1044.2,664.6 L1046.5,666.2 L1048.8,667.9 L1051.1,669.5 L1053.3,671.2 L1055.6,672.9 L1057.9,674.5 L1060.2,676.2 L1062.5,677.9 L1064.8,679.6 L1067.0,681.3 L1069.3,683.1 L1071.6,684.8" stroke="#E01414" stroke-width="3.2" fill="none"/><rect x="37" y="734.8" width="1146" height="4.3" fill="#6E6E6E"/><path d="M545,337 L1183,748.7 M486.3,412.3 L1030,763.2 M441,541.5 L1002.7,904.5 M844,935.5 L1034,812.8 M917,868.6 L1182,868.6 M947.2,868.6 L947.2,906.6 M549,353 L593.5,353 M547,624.5 L599,624.5 M569.5,597 L569.5,677" stroke="#141414" stroke-width="1.3" fill="none"/><path d="M570,331 V400.5" stroke="#111" stroke-width="2" fill="none"/><path d="M570,324 l-4.5,9 h9.0 Z" fill="#111"/><path d="M989.7,335.6 V558" stroke="#E07A28" stroke-width="2" fill="none"/><path d="M989.7,328.6 l-4.2,9 h8.4 Z" fill="#E07A28"/><path d="M1164,335.6 V646" stroke="#E07A28" stroke-width="2" fill="none"/><path d="M1164,328.6 l-4.2,9 h8.4 Z" fill="#E07A28"/><rect x="987.8" y="720.3" width="4.1" height="32.3" fill="#E87A20"/><rect x="1162" y="723" width="4.2" height="32" fill="#E87A20"/><path d="M169,356.90000000000003 V731.0" stroke="#111" stroke-width="2.5" fill="none"/><path d="M169,352.3 l-3.75,6.6 h7.5 Z" fill="#111"/><path d="M169,735.6 l-3.75,-6.6 h7.5 Z" fill="#111"/><path d="M275.4,357.1 V618" stroke="#D82020" stroke-width="1.3" fill="none"/><path d="M275.4,353.1 l-3.6,6 h7.2 Z" fill="#D82020"/><path d="M275.4,622 l-3.6,-6 h7.2 Z" fill="#D82020"/><path d="M275.4,629.1 V731.2" stroke="#1F8AD0" stroke-width="1.4" fill="none"/><path d="M275.4,624.7 l-3.6,6.4 h7.2 Z" fill="#1F8AD0"/><path d="M275.4,735.6 l-3.6,-6.4 h7.2 Z" fill="#1F8AD0"/><path d="M947.2,604 V862" stroke="#D02020" stroke-width="2.3" fill="none"/><path d="M947.2,598 l-3.6,8 h7.2 Z" fill="#D02020"/><path d="M947.2,868 l-3.6,-8 h7.2 Z" fill="#D02020"/><path d="M1100,744.0 V862.7" stroke="#1F7CC0" stroke-width="2.4" fill="none"/><path d="M1100,738.5 l-3.8,7.5 h7.6 Z" fill="#1F7CC0"/><path d="M1100,868.2 l-3.8,-7.5 h7.6 Z" fill="#1F7CC0"/><path d="M803.4,510.59999999999997 V613.0" stroke="#111" stroke-width="1.3" fill="none"/><path d="M803.4,506.4 l-3.6,6.2 h7.2 Z" fill="#111"/><path d="M803.4,617.2 l-3.6,-6.2 h7.2 Z" fill="#111"/><path d="M700,779 L744,747" stroke="#111" stroke-width="1.5"/><path d="M749,743 l-9.5,2.5 l5,6.5 Z" fill="#111"/><text x="165.5" y="345.3" font-size="12.6" fill="#222" font-family="Liberation Sans, sans-serif" textLength="8.3" lengthAdjust="spacingAndGlyphs" >A</text><text x="174.4" y="346.8" font-size="6.5" fill="#222" font-family="Liberation Sans, sans-serif" textLength="11.9" lengthAdjust="spacingAndGlyphs" >Utot</text><text x="188.6" y="345.3" font-size="12.6" fill="#222" font-family="Liberation Sans, sans-serif" textLength="7.2" lengthAdjust="spacingAndGlyphs" font-weight="bold">=</text><text x="198.8" y="345.3" font-size="12.6" fill="#1F82C8" font-family="Liberation Sans, sans-serif" textLength="8.8" lengthAdjust="spacingAndGlyphs" >A</text><text x="207.8" y="346.8" font-size="6.5" fill="#1F82C8" font-family="Liberation Sans, sans-serif" textLength="4.0" lengthAdjust="spacingAndGlyphs" >U</text><text x="211.0" y="345.3" font-size="12.6" fill="#1F82C8" font-family="Liberation Sans, sans-serif" textLength="5.5" lengthAdjust="spacingAndGlyphs" >1</text><text x="217.3" y="345.3" font-size="12.6" fill="#222" font-family="Liberation Sans, sans-serif" textLength="7.3" lengthAdjust="spacingAndGlyphs" >+</text><text x="226.4" y="345.3" font-size="12.6" fill="#D82828" font-family="Liberation Sans, sans-serif" textLength="9.4" lengthAdjust="spacingAndGlyphs" >A</text><text x="236.0" y="346.8" font-size="6.5" fill="#D82828" font-family="Liberation Sans, sans-serif" textLength="3.8" lengthAdjust="spacingAndGlyphs" >U</text><text x="240.6" y="345.3" font-size="12.6" fill="#D82828" font-family="Liberation Sans, sans-serif" textLength="7.0" lengthAdjust="spacingAndGlyphs" >2</text><text x="284.0" y="512.3" font-size="15.4" fill="#D82828" font-family="Liberation Sans, sans-serif" textLength="10.3" lengthAdjust="spacingAndGlyphs" >A</text><text x="294.3" y="514.2" font-size="9" fill="#D82828" font-family="Liberation Sans, sans-serif" textLength="5.6" lengthAdjust="spacingAndGlyphs" >U</text><text x="300.3" y="512.3" font-size="15.4" fill="#D82828" font-family="Liberation Sans, sans-serif" textLength="61.0" lengthAdjust="spacingAndGlyphs" >2 = 46dB</text><text x="284.0" y="689.3" font-size="15.4" fill="#1F82C8" font-family="Liberation Sans, sans-serif" textLength="10.3" lengthAdjust="spacingAndGlyphs" >A</text><text x="294.3" y="691.2" font-size="9" fill="#1F82C8" font-family="Liberation Sans, sans-serif" textLength="5.6" lengthAdjust="spacingAndGlyphs" >U</text><text x="299.5" y="689.3" font-size="15.4" fill="#1F82C8" font-family="Liberation Sans, sans-serif" textLength="58.0" lengthAdjust="spacingAndGlyphs" >1 = 20dB</text><text x="174.4" y="547.4" font-size="17" fill="#222" font-family="Liberation Sans, sans-serif" textLength="11.3" lengthAdjust="spacingAndGlyphs" >A</text><text x="186.0" y="549.4" font-size="9" fill="#222" font-family="Liberation Sans, sans-serif" textLength="15.5" lengthAdjust="spacingAndGlyphs" >Utot</text><text x="202.2" y="547.4" font-size="17" fill="#222" font-family="Liberation Sans, sans-serif" textLength="46.0" lengthAdjust="spacingAndGlyphs" >=66dB</text><text x="359.0" y="617.1" font-size="15.4" fill="#1F82C8" font-family="Liberation Sans, sans-serif" textLength="33.5" lengthAdjust="spacingAndGlyphs" >0 fok</text><text x="462.0" y="551.4" font-size="15.4" fill="#1F82C8" font-family="Liberation Sans, sans-serif" textLength="87.0" lengthAdjust="spacingAndGlyphs" >-20dB/dekád</text><text x="661.5" y="401.5" font-size="15.4" fill="#D82828" font-family="Liberation Sans, sans-serif" textLength="87.5" lengthAdjust="spacingAndGlyphs" >-20dB/dekád</text><text x="539.1" y="693.4" font-size="15.4" fill="#1F82C8" font-family="Liberation Sans, sans-serif" textLength="46.6" lengthAdjust="spacingAndGlyphs" >-45 fok</text><text x="661.5" y="794.4" font-size="15.4" fill="#1F82C8" font-family="Liberation Sans, sans-serif" textLength="46.5" lengthAdjust="spacingAndGlyphs" >-90 fok</text><text x="798.4" y="903.4" font-size="15.4" fill="#1F82C8" font-family="Liberation Sans, sans-serif" textLength="81.6" lengthAdjust="spacingAndGlyphs" >20dB/dekád</text><text x="922.5" y="922.5" font-size="15.4" fill="#1F82C8" font-family="Liberation Sans, sans-serif" textLength="46.9" lengthAdjust="spacingAndGlyphs" >-45 fok</text><text x="1137.4" y="862.0" font-size="15.4" fill="#1F82C8" font-family="Liberation Sans, sans-serif" textLength="33.2" lengthAdjust="spacingAndGlyphs" >0 fok</text><text x="1106.0" y="807.4" font-size="15.4" fill="#1F82C8" font-family="Liberation Sans, sans-serif" textLength="10.3" lengthAdjust="spacingAndGlyphs" >A</text><text x="1116.2" y="809.3" font-size="9" fill="#1F82C8" font-family="Liberation Sans, sans-serif" textLength="5.6" lengthAdjust="spacingAndGlyphs" >U</text><text x="1120.6" y="807.4" font-size="15.4" fill="#1F82C8" font-family="Liberation Sans, sans-serif" textLength="7.5" lengthAdjust="spacingAndGlyphs" >1</text><text x="862.8" y="760.5" font-size="15.4" fill="#D82828" font-family="Liberation Sans, sans-serif" textLength="10.3" lengthAdjust="spacingAndGlyphs" >A</text><text x="873.1" y="762.4" font-size="9" fill="#D82828" font-family="Liberation Sans, sans-serif" textLength="5.6" lengthAdjust="spacingAndGlyphs" >U</text><text x="880.0" y="760.5" font-size="15.4" fill="#D82828" font-family="Liberation Sans, sans-serif" textLength="61.0" lengthAdjust="spacingAndGlyphs" >2 = 46dB</text><text x="811.6" y="576.5" font-size="17" fill="#E0207A" font-family="Liberation Sans, sans-serif" textLength="12.3" lengthAdjust="spacingAndGlyphs" >A</text><text x="825.6" y="578.6" font-size="9.4" fill="#E0406A" font-family="Liberation Sans, sans-serif" textLength="12.6" lengthAdjust="spacingAndGlyphs" font-weight="bold">U2</text><rect x="840.2" y="570" width="9.7" height="3" fill="#222"/><text x="851.3" y="576.5" font-size="17" fill="#6A78C8" font-family="Liberation Sans, sans-serif" textLength="12.3" lengthAdjust="spacingAndGlyphs" >A</text><text x="864.8" y="578.6" font-size="9.4" fill="#6A78C8" font-family="Liberation Sans, sans-serif" textLength="11.2" lengthAdjust="spacingAndGlyphs" font-weight="bold">U1</text><text x="562.5" y="425.0" font-size="27" fill="#E8842C" font-family="Liberation Sans, sans-serif" >f</text><text x="572.0" y="430.8" font-size="18.5" fill="#E8842C" font-family="Liberation Sans, sans-serif" >0</text><text x="983.0" y="712.0" font-size="21" fill="#E8842C" font-family="Liberation Sans, sans-serif" >a</text><text x="1159.2" y="715.0" font-size="20" fill="#E8842C" font-family="Liberation Sans, sans-serif" >b</text><text x="938.0" y="308.4" font-size="28.5" fill="#E8842C" font-family="Liberation Sans, sans-serif" >a</text><text x="956.0" y="306.5" font-size="16" fill="#222" font-family="Liberation Sans, sans-serif" textLength="10.0" lengthAdjust="spacingAndGlyphs" >=</text><text x="970.0" y="308.4" font-size="18.5" fill="#E8842C" font-family="Liberation Sans, sans-serif" >f</text><text x="977.0" y="312.4" font-size="12.3" fill="#E8842C" font-family="Liberation Sans, sans-serif" >0</text><text x="985.0" y="309.0" font-size="15" fill="#222" font-family="Liberation Sans, sans-serif" >*</text><text x="995.3" y="308.4" font-size="19" fill="#D82828" font-family="Liberation Sans, sans-serif" textLength="13.3" lengthAdjust="spacingAndGlyphs" >A</text><text x="1009.5" y="309.5" font-size="8" fill="#D82828" font-family="Liberation Sans, sans-serif" textLength="5.6" lengthAdjust="spacingAndGlyphs" >U</text><text x="1017.3" y="308.4" font-size="19" fill="#D82828" font-family="Liberation Sans, sans-serif" >2</text><text x="1105.3" y="310.6" font-size="20" fill="#E8842C" font-family="Liberation Sans, sans-serif" >b</text><text x="1120.2" y="308.5" font-size="16" fill="#222" font-family="Liberation Sans, sans-serif" textLength="9.6" lengthAdjust="spacingAndGlyphs" >=</text><text x="1133.0" y="310.6" font-size="18.5" fill="#E8842C" font-family="Liberation Sans, sans-serif" >f</text><text x="1139.6" y="313.9" font-size="12.3" fill="#E8842C" font-family="Liberation Sans, sans-serif" >0</text><text x="1146.3" y="310.0" font-size="15" fill="#222" font-family="Liberation Sans, sans-serif" >*</text><text x="1154.3" y="309.0" font-size="17.5" fill="#222" font-family="Liberation Sans, sans-serif" textLength="13.0" lengthAdjust="spacingAndGlyphs" >A</text><text x="1167.6" y="311.0" font-size="8" fill="#222" font-family="Liberation Sans, sans-serif" textLength="15.0" lengthAdjust="spacingAndGlyphs" >Utot</text><path d="M394,297.5 C388.5,300 387.5,310.5 392.5,312 C397.5,313 399.8,306 399.8,303.5 C399.8,309 402.5,313 406.5,312 C411.5,310 411,300 405.5,297.5" stroke="#222" stroke-width="1.3" fill="none"/><text x="413.0" y="312.5" font-size="13.3" fill="#222" font-family="Liberation Sans, sans-serif" textLength="41.2" lengthAdjust="spacingAndGlyphs" >(-3dB)</text><text x="456.3" y="311.3" font-size="21" fill="#222" font-family="Liberation Sans, sans-serif" textLength="95.7" lengthAdjust="spacingAndGlyphs" >=(R2 X Q2</text><text x="553.8" y="313.3" font-size="13.5" fill="#222" font-family="Liberation Sans, sans-serif" textLength="20.0" lengthAdjust="spacingAndGlyphs" >rbe</text><text x="575.0" y="311.3" font-size="21" fill="#222" font-family="Liberation Sans, sans-serif" textLength="38.8" lengthAdjust="spacingAndGlyphs" >) * C</text><text x="617.5" y="314.3" font-size="11.2" fill="#222" font-family="Liberation Sans, sans-serif" textLength="59.5" lengthAdjust="spacingAndGlyphs" >Q2 MILLER</text><text x="152.8" y="197.5" font-size="26" fill="#222" font-family="Liberation Sans, sans-serif" >f</text><rect x="166.7" y="184.4" width="12.2" height="1.8" fill="#222"/><rect x="166.7" y="191" width="12.2" height="1.8" fill="#222"/><path d="M185.2,187.4 H248.9" stroke="#222" stroke-width="1.4"/><text x="210.8" y="184.0" font-size="16.5" fill="#222" font-family="Liberation Sans, sans-serif" >1</text><text x="186.6" y="204.8" font-size="17.5" fill="#222" font-family="Liberation Sans, sans-serif" >2</text><path d="M197.8,195.2 C198.8,193 200.5,192.8 202.5,192.8 H215 M205,193 C205,198 204.2,202.5 201,204.5 M211.4,193 V204.6" stroke="#222" stroke-width="1.3" fill="none"/><text x="219.2" y="205.5" font-size="15" fill="#222" font-family="Liberation Sans, sans-serif" >*</text><path d="M233.5,193 C229,195 228,203.5 232,205 C236,206 237.7,200.5 237.7,198.5 C237.7,202.5 239.7,206 243.3,205 C247.3,203.5 246.8,195 242.3,193" stroke="#222" stroke-width="1.2" fill="none"/><text x="498" y="111" font-size="11" fill="#222" font-family="Liberation Sans, sans-serif">Q2 = ideális tranzisztor</text><text x="682" y="112" font-size="11" fill="#222" font-family="Liberation Sans, sans-serif">Q2 = valóságos tranzisztor</text><path d="M438.5,213.5 V117.5 H646.5 V212.5 H656" stroke="#5A5A98" stroke-width="1" fill="none"/><path d="M405,213.5 H453 M469,213.5 H500" stroke="#5A5A98" stroke-width="1" fill="none"/><path d="M386,273.5 H773.5 V262" stroke="#5A5A98" stroke-width="1" fill="none"/><path d="M381.5,271 V276 M384,269 V278 M386.5,266.5 V280.5" stroke="#444" stroke-width="1" fill="none"/><path d="M405,219.5 H416.5 V248 M416.5,256 V273.5" stroke="#5A5A98" stroke-width="1" fill="none"/><path d="M411,248.5 H422 M413.5,251 H419.5 M411,253.5 H422 M413.5,256 H419.5" stroke="#444" stroke-width="1" fill="none"/><path d="M505.5,126.5 H604" stroke="#1E2A5A" stroke-width="1.4" fill="none"/><circle cx="605.5" cy="126" r="1.6" fill="#fff" stroke="#333" stroke-width="0.8"/><path d="M505.5,126.5 V138 M574.5,126.5 V138 M574.5,155 V170" stroke="#5A5A98" stroke-width="1" fill="none"/><path d="M505.5,155 V205" stroke="#1E8A4A" stroke-width="1.2" fill="none"/><path d="M505,178.4 H566" stroke="#1E8A4A" stroke-width="1.1" fill="none"/><path d="M505,180.2 H568" stroke="#4A6A9A" stroke-width="1" fill="none"/><path d="M505.5,221 V247 M505.5,264 V273.5 M574.5,189 V226 M574.5,234 V247 M574.5,264 V273.5" stroke="#5A5A98" stroke-width="1" fill="none"/><rect x="502.5" y="138.5" width="6.0" height="16.0" fill="#fff" stroke="#555" stroke-width="1"/><rect x="571.5" y="138.5" width="6.0" height="16.0" fill="#fff" stroke="#555" stroke-width="1"/><rect x="502.5" y="247.5" width="6.0" height="16.0" fill="#fff" stroke="#555" stroke-width="1"/><rect x="571.5" y="247.5" width="6.0" height="16.0" fill="#fff" stroke="#555" stroke-width="1"/><rect x="453.5" y="211.0" width="15.0" height="5.0" fill="#fff" stroke="#555" stroke-width="1"/><rect x="372.5" y="203.7" width="32" height="24.8" fill="#F4F6FF" stroke="#2A2A7A" stroke-width="1.1"/><path d="M377,212 H380 C382,204 385,204 387.5,213 C390,223 393,223 395,213 H399" stroke="#333" stroke-width="0.9" fill="none"/><text x="373" y="201" font-size="6" fill="#777" font-family="Liberation Mono, monospace" textLength="28.0" lengthAdjust="spacingAndGlyphs">-1m/1mV</text><text x="381" y="227" font-size="6" fill="#555" font-family="Liberation Mono, monospace" textLength="16.0" lengthAdjust="spacingAndGlyphs">1kHz</text><path d="M500.3,206.5 V220" stroke="#111" stroke-width="1.8" fill="none"/><path d="M500.5,210.5 L505.5,206 V204 M500.5,216 L505.5,220.5 V222" stroke="#222" stroke-width="1" fill="none"/><path d="M505,220.5 l-3.2,-0.6 l2,-2.2 Z" fill="#111"/><path d="M569.3,173 V186.5" stroke="#111" stroke-width="2" fill="none"/><path d="M569.5,177 L574.5,172.5 V169 M569.5,182.5 L574.5,187 V190" stroke="#222" stroke-width="1" fill="none"/><path d="M570,176.6 l3.3,-0.6 l-1.3,-2.6 Z" fill="#111"/><rect x="501.3" y="187.5" width="7" height="7.2" fill="#DDEEDD" stroke="#2E8B3A" stroke-width="1.4"/><rect x="503.5" y="189.7" width="2.6" height="2.8" fill="#2E8B3A"/><rect x="570.5" y="226" width="7" height="7.5" fill="#DDD" stroke="#222" stroke-width="1.4"/><rect x="572.7" y="228.3" width="2.6" height="2.8" fill="#444"/><circle cx="438.5" cy="213.5" r="1.4" fill="#223"/><circle cx="416.5" cy="273.5" r="1.4" fill="#223"/><circle cx="505.5" cy="273.5" r="1.4" fill="#223"/><circle cx="574.5" cy="273.5" r="1.4" fill="#223"/><circle cx="574.5" cy="126.5" r="1.4" fill="#223"/><circle cx="505.5" cy="179.3" r="1.4" fill="#223"/><text x="510" y="145" font-size="7" fill="#555" font-family="Liberation Mono, monospace" textLength="8.0" lengthAdjust="spacingAndGlyphs">R2</text><text x="510" y="151" font-size="7" fill="#555" font-family="Liberation Mono, monospace" textLength="16.0" lengthAdjust="spacingAndGlyphs">2.5k</text><text x="578.5" y="145" font-size="7" fill="#555" font-family="Liberation Mono, monospace" textLength="8.0" lengthAdjust="spacingAndGlyphs">R5</text><text x="578.5" y="151" font-size="7" fill="#555" font-family="Liberation Mono, monospace" textLength="8.0" lengthAdjust="spacingAndGlyphs">10</text><text x="510" y="254" font-size="7" fill="#555" font-family="Liberation Mono, monospace" textLength="8.0" lengthAdjust="spacingAndGlyphs">R3</text><text x="508.5" y="260" font-size="7" fill="#555" font-family="Liberation Mono, monospace" textLength="12.0" lengthAdjust="spacingAndGlyphs">100</text><text x="578.5" y="254" font-size="7" fill="#555" font-family="Liberation Mono, monospace" textLength="8.0" lengthAdjust="spacingAndGlyphs">R4</text><text x="578.5" y="260" font-size="7" fill="#555" font-family="Liberation Mono, monospace" textLength="8.0" lengthAdjust="spacingAndGlyphs">3k</text><text x="456.5" y="203" font-size="7" fill="#555" font-family="Liberation Mono, monospace" textLength="8.0" lengthAdjust="spacingAndGlyphs">R1</text><text x="459.5" y="209" font-size="7" fill="#555" font-family="Liberation Mono, monospace" textLength="4.0" lengthAdjust="spacingAndGlyphs">1</text><text x="601" y="135" font-size="7" fill="#555" font-family="Liberation Mono, monospace" textLength="12.0" lengthAdjust="spacingAndGlyphs">30V</text><text x="426" y="251" font-size="7" fill="#555" font-family="Liberation Mono, monospace" textLength="8.0" lengthAdjust="spacingAndGlyphs">V2</text><text x="425" y="257" font-size="7" fill="#555" font-family="Liberation Mono, monospace" textLength="20.0" lengthAdjust="spacingAndGlyphs">660mV</text><text x="506" y="214" font-size="7" fill="#555" font-family="Liberation Mono, monospace" textLength="24.0" lengthAdjust="spacingAndGlyphs">BC547B</text><text x="578" y="182" font-size="7" fill="#555" font-family="Liberation Mono, monospace" textLength="12.0" lengthAdjust="spacingAndGlyphs">PNP</text><text x="511" y="204.5" font-size="8.8" fill="#222" font-family="Liberation Sans, sans-serif">Q1</text><text x="578" y="172.5" font-size="8.8" fill="#222" font-family="Liberation Sans, sans-serif">Q2</text><text x="507.5" y="175" font-size="10" fill="#2E9A5E" font-family="Liberation Sans, sans-serif">A<tspan font-size="5.5" dy="1">U</tspan><tspan dy="-1">1</tspan></text><text x="576" y="210" font-size="10.5" fill="#222" font-family="Liberation Sans, sans-serif">A<tspan font-size="5.5" dy="1">U</tspan><tspan dy="-1">2</tspan></text><path d="M673,212.5 H699" stroke="#5A5A98" stroke-width="1" fill="none"/><path d="M704.5,138 V125.5 H802.5 M773.5,125.5 V138 M773.5,153.5 V169" stroke="#5A5A98" stroke-width="1" fill="none"/><path d="M802.5,125 l2.2,-2.2 l2.2,2.2 l-2.2,2.2 Z" fill="#fff" stroke="#444" stroke-width="0.7"/><path d="M704.5,153.5 V205" stroke="#2A94DC" stroke-width="1.3" fill="none"/><path d="M704.5,177.4 H764" stroke="#2A98E0" stroke-width="1.2" fill="none"/><path d="M704.5,179.5 H768" stroke="#111" stroke-width="1.4" fill="none"/><path d="M704.5,221 V247 M704.5,263 V273.5" stroke="#5A5A98" stroke-width="1" fill="none"/><path d="M773.5,189 V246" stroke="#D02828" stroke-width="1.2" fill="none"/><rect x="701.5" y="137.5" width="6.0" height="16.0" fill="#fff" stroke="#555" stroke-width="1"/><rect x="770.5" y="137.5" width="6.0" height="16.0" fill="#fff" stroke="#555" stroke-width="1"/><rect x="701.5" y="247.5" width="6.0" height="15.0" fill="#fff" stroke="#555" stroke-width="1"/><rect x="770.5" y="246.5" width="6.0" height="15.0" fill="#fff" stroke="#555" stroke-width="1"/><rect x="656.5" y="210.0" width="16.0" height="5.0" fill="#fff" stroke="#555" stroke-width="1"/><path d="M699.2,206 V220" stroke="#111" stroke-width="1.8" fill="none"/><path d="M699.5,210.5 L704.5,206 V204 M699.5,216 L704.5,220.5 V222" stroke="#222" stroke-width="1" fill="none"/><path d="M704.2,220.5 l-3.2,-0.6 l2,-2.2 Z" fill="#111"/><path d="M767.8,172.5 V186" stroke="#111" stroke-width="2.2" fill="none"/><path d="M768,177 L773.5,172 V169 M768,182 L773.5,187 V190" stroke="#222" stroke-width="1" fill="none"/><rect x="700.7" y="189.5" width="6.8" height="8" fill="#DDE" stroke="#2A2A9A" stroke-width="1.5"/><rect x="702.8" y="192" width="2.6" height="3" fill="#2A2A9A"/><rect x="770.6" y="225.7" width="6.8" height="8" fill="#FDD" stroke="#D02828" stroke-width="1.5"/><rect x="772.7" y="228.2" width="2.6" height="3" fill="#D02828"/><circle cx="704.5" cy="273.5" r="1.4" fill="#223"/><circle cx="773.5" cy="125.5" r="1.4" fill="#223"/><circle cx="703.8" cy="179.5" r="1.4" fill="#223"/><text x="709" y="143" font-size="10" fill="#222" font-family="Liberation Sans, sans-serif">R2</text><text x="708.5" y="151" font-size="7" fill="#555" font-family="Liberation Mono, monospace" textLength="16.0" lengthAdjust="spacingAndGlyphs">2.2k</text><text x="779" y="151" font-size="7" fill="#555" font-family="Liberation Mono, monospace" textLength="8.0" lengthAdjust="spacingAndGlyphs">10</text><text x="778.5" y="142.5" font-size="10.5" fill="#222" font-family="Liberation Sans, sans-serif">R<tspan font-size="7.5" dy="2.5">E</tspan></text><text x="779.5" y="172.5" font-size="8.8" fill="#222" font-family="Liberation Sans, sans-serif">Q2</text><text x="775.5" y="182" font-size="7" fill="#555" font-family="Liberation Mono, monospace" textLength="24.0" lengthAdjust="spacingAndGlyphs">BC556B</text><text x="714" y="204.5" font-size="8.8" fill="#222" font-family="Liberation Sans, sans-serif">Q1</text><text x="706.5" y="214" font-size="7" fill="#555" font-family="Liberation Mono, monospace" textLength="24.0" lengthAdjust="spacingAndGlyphs">BC547B</text><text x="709" y="251" font-size="10" fill="#222" font-family="Liberation Sans, sans-serif">R3</text><text x="707.5" y="260" font-size="7" fill="#555" font-family="Liberation Mono, monospace" textLength="12.0" lengthAdjust="spacingAndGlyphs">100</text><text x="779" y="260" font-size="7" fill="#555" font-family="Liberation Mono, monospace" textLength="8.0" lengthAdjust="spacingAndGlyphs">3k</text><text x="778.5" y="250" font-size="10.5" fill="#222" font-family="Liberation Sans, sans-serif">R<tspan font-size="7.5" dy="2.5">t</tspan></text><text x="658.5" y="201" font-size="7" fill="#555" font-family="Liberation Mono, monospace" textLength="8.0" lengthAdjust="spacingAndGlyphs">R1</text><text x="662.5" y="208" font-size="7" fill="#555" font-family="Liberation Mono, monospace" textLength="4.0" lengthAdjust="spacingAndGlyphs">1</text><text x="800" y="135" font-size="7" fill="#555" font-family="Liberation Mono, monospace" textLength="12.0" lengthAdjust="spacingAndGlyphs">30V</text><text x="708" y="175" font-size="10" fill="#1F82C8" font-family="Liberation Sans, sans-serif">A<tspan font-size="5.5" dy="1">U</tspan><tspan dy="-1">1</tspan></text><text x="777" y="211" font-size="10.5" fill="#D02828" font-family="Liberation Sans, sans-serif">A<tspan font-size="5.5" dy="1">U</tspan><tspan dy="-1">2</tspan></text></svg><svg class="a" style="left:14px;top:51px" width="24" height="24" viewBox="0 0 24 24"><defs><linearGradient id="gf" x1="0" y1="0" x2="0" y2="1"><stop offset="0" stop-color="#FBE87A"/><stop offset="1" stop-color="#E6B62E"/></linearGradient></defs><path d="M2,8 H9 L11,10 H19 V21 H2 Z" fill="#E2B93C" stroke="#B89A38" stroke-width="0.8"/><path d="M1.5,22 L3,12 H21.5 L20,22 Z" fill="url(#gf)" stroke="#C8A030" stroke-width="0.8"/><path d="M10,5.5 C13,2.5 17,3 18.5,7" stroke="#3A78C8" stroke-width="2.4" fill="none"/><path d="M21.8,6 L19.5,12 L15.5,8 Z" fill="#3A78C8"/></svg><svg class="a" style="left:45px;top:53px" width="20" height="20" viewBox="0 0 20 20"><rect x="1.5" y="1.5" width="17" height="16.5" rx="1" fill="#6A62C8" stroke="#4A449A" stroke-width="1"/><rect x="5" y="2" width="10" height="5" fill="#55557A"/><rect x="6" y="2.5" width="6" height="3.5" fill="#9A98C8"/><rect x="4.5" y="10" width="11" height="8" fill="#F4F4FA" stroke="#4A449A" stroke-width="0.6"/><rect x="6.5" y="12.3" width="7" height="1.1" fill="#888"/><rect x="6.5" y="14.8" width="7" height="1.1" fill="#888"/></svg><svg class="a" style="left:140px;top:51px" width="23" height="23" viewBox="0 0 23 23"><rect x="6" y="2" width="11" height="8" fill="#fff" stroke="#888" stroke-width="1"/><rect x="2" y="9" width="19" height="9" rx="1.5" fill="#C8C8C8" stroke="#777" stroke-width="1"/><rect x="2.5" y="9.5" width="18" height="3" fill="#E6E6E6"/><rect x="5" y="15" width="13" height="6" fill="#F4F4E0" stroke="#888" stroke-width="0.8"/><rect x="7" y="17.5" width="9" height="2" fill="#E8D84A"/></svg><svg class="a" style="left:171px;top:52px" width="22" height="22" viewBox="0 0 22 22"><rect x="3.5" y="2" width="4.5" height="5" fill="#777"/><rect x="13" y="2" width="4.5" height="5" fill="#777"/><path d="M2.5,8 C2.5,6 9,6 9,8 V19 H1.5 Z" fill="#7A7A7A" stroke="#555" stroke-width="0.8"/><path d="M12,8 C12,6 18.5,6 18.5,8 L19.5,19 H12 Z" fill="#7A7A7A" stroke="#555" stroke-width="0.8"/><rect x="8.5" y="8" width="4" height="6" fill="#8A8A8A"/><rect x="3" y="9" width="2.2" height="8" fill="#B0B0B0"/><rect x="13.5" y="9" width="2.2" height="8" fill="#B0B0B0"/></svg><svg class="a" style="left:249px;top:50px" width="24" height="26" viewBox="0 0 24 26"><path d="M7,14 V6.5 C7,4.3 9.7,4.3 9.7,6.5 V4.3 C9.7,2 12.5,2 12.5,4.3 V5.3 C12.5,3.3 15.3,3.3 15.3,5.3 V7.3 C15.3,5.6 18,5.6 18,7.8 V16 C18,20.5 16,23.5 12.5,23.5 H11 C8.7,23.5 7,22 5.3,19 L2.6,14 C1.8,12.3 4,11.2 5.1,12.8 Z" fill="#FCFCFE" stroke="#666" stroke-width="1"/><path d="M9.7,6.5 V12 M12.5,5.3 V12 M15.3,7.3 V12.5" stroke="#999" stroke-width="0.8"/><path d="M8,19 C10,22 14,22 16.5,18" stroke="#C8CCD8" stroke-width="2" fill="none"/></svg><svg class="a" style="left:280px;top:52px" width="19" height="21" viewBox="0 0 19 21"><path d="M2,1.5 H8 M2,18.5 H8 M5,1.5 V18.5" stroke="#222" stroke-width="1.4" fill="none"/><path d="M9.5,5.5 L17,10.5 L9.5,15.5 Z" fill="#555"/></svg><svg class="a" style="left:342px;top:52px" width="23" height="22" viewBox="0 0 23 22"><rect x="1" y="1" width="20" height="19" fill="none" stroke="#444" stroke-width="0.9" stroke-dasharray="3,2"/><rect x="2.5" y="6" width="17" height="12" rx="1" fill="#2A2A2E" stroke="#222" stroke-width="0.6"/><rect x="3" y="6.3" width="16" height="3" fill="#B8B8BC"/><rect x="4" y="4.5" width="5" height="2" fill="#555"/><circle cx="11.5" cy="12.5" r="3.8" fill="#223" stroke="#AAB" stroke-width="0.9"/><circle cx="11.5" cy="12.5" r="1.6" fill="#5A7AC0"/></svg><svg class="a" style="left:383px;top:52px" width="24" height="24" viewBox="0 0 24 24"><path d="M13,13 L20,20.5" stroke="#D8B040" stroke-width="3.2" stroke-linecap="round"/><circle cx="9" cy="9" r="6.5" fill="#E8F0FF" stroke="#4A68B8" stroke-width="1.8"/><path d="M5.5,9 H12.5 M9,5.5 V12.5" stroke="#1E3E9A" stroke-width="2"/></svg><svg class="a" style="left:407px;top:61px" width="7" height="5" viewBox="0 0 7 5"><path d="M0.5,0.5 H6.5 L3.5,4 Z" fill="#111"/></svg><svg class="a" style="left:424px;top:52px" width="18" height="23" viewBox="0 0 18 23"><defs><linearGradient id="gp" x1="0" y1="0" x2="0" y2="1"><stop offset="0" stop-color="#F8FBFF"/><stop offset="1" stop-color="#B8CCEC"/></linearGradient></defs><rect x="1.5" y="1.5" width="14" height="19" fill="url(#gp)" stroke="#8EA4C8" stroke-width="1"/><path d="M8.5,3.5 V9 M8.5,19 V13.5" stroke="#2A4A8A" stroke-width="1.3"/><path d="M5.5,6.5 L8.5,3 L11.5,6.5 Z M5.5,16 L8.5,19.5 L11.5,16 Z" fill="#2A4A8A"/></svg><svg class="a" style="left:456px;top:52px" width="19" height="23" viewBox="0 0 19 23"><rect x="1.5" y="1.5" width="15" height="19" fill="url(#gp)" stroke="#8EA4C8" stroke-width="1"/><path d="M3,11 H7 M15,11 H11" stroke="#2A5AA8" stroke-width="1.3"/><path d="M5.5,8.5 L2.5,11 L5.5,13.5 Z M12.5,8.5 L15.5,11 L12.5,13.5 Z" fill="#2A5AA8"/></svg><svg class="a" style="left:489px;top:54px" width="16" height="16" viewBox="0 0 16 16"><circle cx="7.5" cy="8" r="6.3" fill="#DCE6F8" stroke="#7A92C0" stroke-width="1.2"/><rect x="4" y="7" width="7" height="2.2" fill="#2A4A9A"/></svg><svg class="a" style="left:581px;top:54px" width="16" height="16" viewBox="0 0 16 16"><circle cx="7.5" cy="8" r="6.3" fill="#DCE6F8" stroke="#7A92C0" stroke-width="1.2"/><path d="M4,8 H11 M7.5,4.5 V11.5" stroke="#2A4A9A" stroke-width="2.2"/></svg><svg class="a" style="left:563px;top:61px" width="7" height="5" viewBox="0 0 7 5"><path d="M0.5,0.5 H6.5 L3.5,4 Z" fill="#111"/></svg><svg class="a" style="left:620px;top:51px" width="24" height="24" viewBox="0 0 24 24"><defs><linearGradient id="gb" x1="0" y1="0" x2="1" y2="1"><stop offset="0" stop-color="#F4F8FF"/><stop offset="1" stop-color="#B4CAEE"/></linearGradient></defs><path d="M10.5,11.5 H19 L21.5,14 V21.5 H10.5 Z" fill="#F0F0EE" stroke="#B4B4B0" stroke-width="1"/><path d="M2.5,2.5 H9.5 L12.5,5.5 V13.5 H2.5 Z" fill="url(#gb)" stroke="#6A86C0" stroke-width="1"/><path d="M9.5,2.5 V5.5 H12.5" fill="none" stroke="#6A86C0" stroke-width="0.8"/><path d="M14.5,3 H19 V8" stroke="#111" stroke-width="1.6" fill="none"/><path d="M16.2,7 L19,11 L21.8,7 Z" fill="#111"/></svg><svg class="a" style="left:653px;top:51px" width="24" height="24" viewBox="0 0 24 24"><path d="M3.5,11.5 H12 L14.5,14 V21.5 H3.5 Z" fill="#F0F0EE" stroke="#B4B4B0" stroke-width="1"/><path d="M11.5,2.5 H18.5 L21.5,5.5 V13.5 H11.5 Z" fill="url(#gb)" stroke="#6A86C0" stroke-width="1"/><path d="M18.5,2.5 V5.5 H21.5" fill="none" stroke="#6A86C0" stroke-width="0.8"/><path d="M9,3 H4.5 V8" stroke="#111" stroke-width="1.6" fill="none"/><path d="M1.7,7 L4.5,11 L7.3,7 Z" fill="#111"/></svg><svg class="a" style="left:683px;top:59px" width="5" height="8" viewBox="0 0 5 8"><path d="M4.5,0.5 V7.5 L0.5,4 Z" fill="#111"/></svg><svg class="a" style="left:705px;top:53px" width="19" height="19" viewBox="0 0 19 19"><circle cx="9" cy="9" r="7.6" fill="#3E9A3E" stroke="#2A6A2A" stroke-width="1"/><ellipse cx="8" cy="5.5" rx="5.5" ry="3.5" fill="#8ED08E" opacity="0.6"/><text x="9" y="13.5" text-anchor="middle" font-size="12.5" font-weight="bold" fill="#fff" font-family="Liberation Sans, sans-serif">?</text></svg><svg class="a" style="left:751px;top:61px" width="7" height="5" viewBox="0 0 7 5"><path d="M0.5,0.5 H6.5 L3.5,4 Z" fill="#111"/></svg><svg class="a" style="left:0px;top:87px" width="20" height="94" viewBox="0 0 20 94"><path d="M19.5,0.5 L3.5,16.5 V89 L5,91 H19.5 Z" fill="#ECE9DA" stroke="#8C897A" stroke-width="1"/><path d="M4,92 H19" stroke="#9A9788" stroke-width="2"/><path d="M6,88 h2 m2,0 h2 m2,0 h2" stroke="#AAA798" stroke-width="2"/><text transform="translate(14.5,75) rotate(-90)" font-size="11"  fill="#111" font-family="Liberation Sans, sans-serif">Bookmarks</text></svg><svg class="a" style="left:0px;top:173px" width="20" height="64" viewBox="0 0 20 64"><path d="M19.5,0.5 L3.5,16.5 V59 L5,61 H19.5 Z" fill="#ECE9DA" stroke="#8C897A" stroke-width="1"/><path d="M4,62 H19" stroke="#9A9788" stroke-width="2"/><path d="M6,58 h2 m2,0 h2 m2,0 h2" stroke="#AAA798" stroke-width="2"/><text transform="translate(14.5,49) rotate(-90)" font-size="11" font-weight="bold" fill="#111" font-family="Liberation Sans, sans-serif">Pages</text></svg><svg class="a" style="left:0px;top:776px" width="20" height="101" viewBox="0 0 20 101"><path d="M19.5,0.5 L3.5,16.5 V96 L5,98 H19.5 Z" fill="#ECE9DA" stroke="#8C897A" stroke-width="1"/><path d="M4,99 H19" stroke="#9A9788" stroke-width="2"/><path d="M6,95 h2 m2,0 h2 m2,0 h2" stroke="#AAA798" stroke-width="2"/><text transform="translate(14.5,82) rotate(-90)" font-size="11"  fill="#111" font-family="Liberation Sans, sans-serif">Attachments</text></svg><div class="a" style="left:1263px;top:81px;width:17px;height:16px;background:#ECE9D8;border:1px solid #fff;border-right-color:#ACA899;border-bottom-color:#ACA899;box-sizing:border-box"></div><svg class="a" style="left:1268px;top:83px" width="8" height="12" viewBox="0 0 8 12"><path d="M1,1 V11 L7,6 Z" fill="#111"/></svg><svg class="a" style="left:10px;top:973px" width="18" height="17" viewBox="0 0 18 17"><rect x="1.5" y="1.5" width="15" height="12.5" fill="#E8E8E4" stroke="#8A8A84" stroke-width="1"/><rect x="3" y="3" width="12" height="9" fill="#0A0A0A"/><rect x="6" y="4" width="6" height="7" fill="#E4E6EA"/><path d="M7,6 H11 M7,8 H11" stroke="#9A9CA4" stroke-width="0.8"/><rect x="5" y="15" width="8" height="1.2" fill="#A8A8A0"/></svg><svg class="a" style="left:43px;top:973px" width="17" height="17" viewBox="0 0 17 17"><defs><linearGradient id="gs" x1="0" y1="0" x2="1" y2="1"><stop offset="0" stop-color="#FFFFFF"/><stop offset="1" stop-color="#C4C6CC"/></linearGradient></defs><rect x="1.5" y="1.5" width="13" height="14" fill="url(#gs)" stroke="#84847E" stroke-width="1"/><path d="M2,5.5 H14" stroke="#9A9A94" stroke-width="1"/><rect x="5" y="9" width="6" height="2" fill="#4A4A6A"/></svg><svg class="a" style="left:509px;top:973px" width="19" height="17" viewBox="0 0 19 17"><rect x="1" y="1" width="3" height="14" fill="#B4B2A6"/><path d="M16,1 V15 L6,8 Z" fill="#B4B2A6"/></svg><svg class="a" style="left:542px;top:973px" width="16" height="17" viewBox="0 0 16 17"><path d="M13,1 V15 L2,8 Z" fill="#B4B2A6"/></svg><svg class="a" style="left:651px;top:973px" width="16" height="17" viewBox="0 0 16 17"><path d="M2,1 V15 L13,8 Z" fill="#B4B2A6"/></svg><svg class="a" style="left:678px;top:973px" width="19" height="17" viewBox="0 0 19 17"><rect x="14" y="1" width="3" height="14" fill="#B4B2A6"/><path d="M2,1 V15 L12,8 Z" fill="#B4B2A6"/></svg><svg class="a" style="left:720px;top:973px" width="20" height="18" viewBox="0 0 20 18"><circle cx="9.5" cy="9" r="8" fill="#BDBBB0" stroke="#A8A69A" stroke-width="1"/><path d="M13.5,9 H7 M9.5,5.5 L6,9 L9.5,12.5" stroke="#ECE9D8" stroke-width="2.2" fill="none"/></svg><svg class="a" style="left:751px;top:973px" width="20" height="18" viewBox="0 0 20 18"><circle cx="9.5" cy="9" r="8" fill="#BDBBB0" stroke="#A8A69A" stroke-width="1"/><path d="M5.5,9 H12 M9.5,5.5 L13,9 L9.5,12.5" stroke="#ECE9D8" stroke-width="2.2" fill="none"/></svg><svg class="a" style="left:1157px;top:974px" width="16" height="16" viewBox="0 0 16 16"><rect x="1.5" y="1.5" width="12" height="12" fill="#E4ECFA" stroke="#8EA4C8" stroke-width="1"/></svg><svg class="a" style="left:1188px;top:973px" width="16" height="18" viewBox="0 0 16 18"><rect x="1.5" y="1.5" width="11" height="6" fill="#E8E6DA" stroke="#CBC9BC" stroke-width="1"/><rect x="1.5" y="9.5" width="11" height="6" fill="#E8E6DA" stroke="#CBC9BC" stroke-width="1"/></svg><svg class="a" style="left:1220px;top:973px" width="18" height="18" viewBox="0 0 18 18"><rect x="1.5" y="1.5" width="5" height="6" fill="#E8E6DA" stroke="#CBC9BC" stroke-width="1"/><rect x="9.5" y="1.5" width="5" height="6" fill="#E8E6DA" stroke="#CBC9BC" stroke-width="1"/><rect x="1.5" y="9.5" width="5" height="6" fill="#E8E6DA" stroke="#CBC9BC" stroke-width="1"/><rect x="9.5" y="9.5" width="5" height="6" fill="#E8E6DA" stroke="#CBC9BC" stroke-width="1"/></svg><svg class="a" style="left:1252px;top:975px" width="20" height="14" viewBox="0 0 20 14"><rect x="1.5" y="1.5" width="6" height="9" fill="#E8E6DA" stroke="#CBC9BC" stroke-width="1"/><rect x="10.5" y="1.5" width="6" height="9" fill="#E8E6DA" stroke="#CBC9BC" stroke-width="1"/></svg><svg class="a" style="left:10px;top:999px" width="24" height="20" viewBox="0 0 24 20"><path d="M3,4 C6,2 8,3 10,4 L9,9 C7,8 5,8 2,9 Z" fill="#E8502A"/><path d="M11,4.5 C13,5.5 16,5 18,3.5 L17,8.5 C15,10 12,10 10,9.5 Z" fill="#6AC04A"/><path d="M1.8,10 C5,9 7,9.5 8.8,10.3 L7.8,15.5 C6,14.5 4,14.5 1,15.5 Z" fill="#3A7AE0"/><path d="M9.8,10.7 C12,11.3 15,11 16.8,9.7 L15.8,14.8 C14,16 11,16.5 8.8,15.7 Z" fill="#F0C030"/></svg><svg class="a" style="left:118px;top:1000px" width="16" height="18" viewBox="0 0 16 18"><ellipse cx="8" cy="6.5" rx="6.5" ry="6" fill="#E84A28"/><path d="M3,4 C5,0 11,0 13,4 Z" fill="#F4D030"/><path d="M2,7 H14 L13,10 H3 Z" fill="#3A8AE0"/><path d="M5,12 L8,16 L11,12 Z" fill="#8A5A2A"/><rect x="6.5" y="15" width="3" height="2.5" fill="#5A3A1A"/></svg><svg class="a" style="left:279px;top:1000px" width="16" height="18" viewBox="0 0 16 18"><rect x="1" y="1.5" width="14" height="15" fill="#1A2A9A" stroke="#0A1050" stroke-width="1"/><rect x="4" y="2" width="8" height="5" fill="#E8E8F0"/><rect x="2.5" y="9" width="11" height="2" fill="#fff"/><rect x="2.5" y="12" width="11" height="2" fill="#E83030"/><rect x="2.5" y="14.5" width="11" height="1.5" fill="#fff"/></svg><svg class="a" style="left:439px;top:1000px" width="17" height="18" viewBox="0 0 17 18"><rect x="0.5" y="0.5" width="16" height="17" fill="#D9281C"/><path d="M1.5,16.5 L5.5,4.5 L9.5,2.5 L12.5,3.5 L8.5,9.5 L12.5,14.5 L6.5,11.5 Z" fill="#fff"/><path d="M9.5,4.5 L14.5,2.5 L13.5,13.5 Z" fill="#F6B6AE"/></svg><svg class="a" style="left:1146px;top:1000px" width="18" height="18" viewBox="0 0 18 18"><path d="M2,14 L12,4 L14,6 L5,15 Z" fill="#222"/><path d="M1,15 H16" stroke="#E8E8E8" stroke-width="1.5"/><rect x="9" y="9" width="3" height="5" fill="#30C030"/><rect x="12" y="9" width="3" height="5" fill="#E83030"/></svg><svg class="a" style="left:1161px;top:1000px" width="17" height="19" viewBox="0 0 17 19"><path d="M9,1.5 L16,4 C16,11 13,16 9,18 C5,16 2,11 2,4 Z" fill="#D82828" stroke="#F4C8C8" stroke-width="1"/><path d="M6,7 L12,13 M12,7 L6,13" stroke="#fff" stroke-width="2"/></svg><svg class="a" style="left:1180px;top:1001px" width="17" height="17" viewBox="0 0 17 17"><path d="M2,6 H6 L11,1.5 V16.5 L6,12 H2 Z" fill="#E86828" stroke="#222" stroke-width="0.8"/><path d="M13,5 C15,7 15,11 13,13" stroke="#222" stroke-width="1.3" fill="none"/></svg><svg class="a" style="left:1198px;top:1000px" width="15" height="19" viewBox="0 0 15 19"><ellipse cx="8" cy="10" rx="6.5" ry="9" fill="#1A30C0" stroke="#0A1470" stroke-width="1"/><path d="M5,6.5 L11,13 L8,15.5 V4.5 L11,7 L5,13.5" stroke="#E83A3A" stroke-width="1.4" fill="none"/></svg><svg class="a" style="left:1214px;top:1000px" width="18" height="18" viewBox="0 0 18 18"><circle cx="9" cy="9" r="6.5" fill="#AAA" stroke="#444" stroke-width="1.2"/><circle cx="8" cy="8" r="3" fill="#DDD"/><path d="M13,14 L18,18" stroke="#8A7ACA" stroke-width="2"/></svg></body></html>
